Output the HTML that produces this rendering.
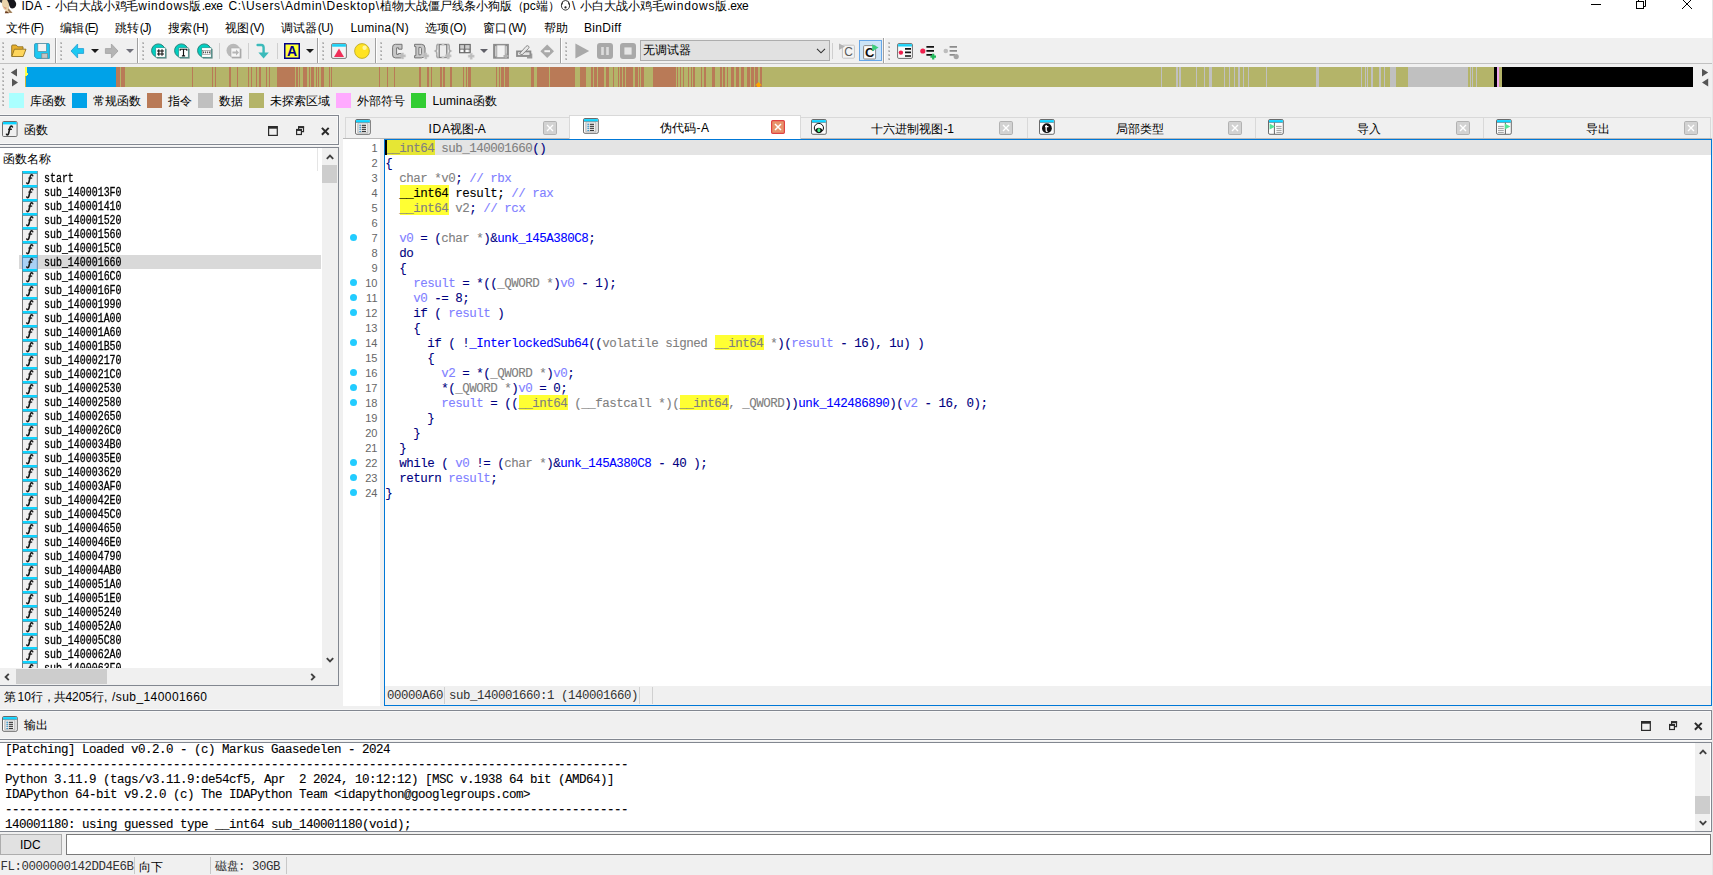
<!DOCTYPE html><html><head><meta charset="utf-8"><title>IDA</title><style>
html,body{margin:0;padding:0}
body{width:1713px;height:875px;overflow:hidden;background:#f0f0f0;position:relative;font-family:"Liberation Sans",sans-serif;font-size:12px;color:#000}
div{position:absolute;box-sizing:border-box;white-space:pre}
svg{position:absolute;overflow:visible}
.t{font-family:"Liberation Sans",sans-serif;font-size:12px;line-height:14px;color:#000}
.m{font-family:"Liberation Mono",monospace;font-size:12.5px;letter-spacing:-0.5px;line-height:15px;color:#000;-webkit-text-stroke:0.1px}
.fn{font-family:"Liberation Mono",monospace;font-size:12px;line-height:14px;color:#000;transform:scaleX(0.828);transform-origin:0 0;-webkit-text-stroke:0.3px #000}
.ln{font-family:"Liberation Sans",sans-serif;font-size:11px;line-height:15px;color:#666;text-align:right;width:36px}
.k{color:#808080}.n{color:#000080}.v{color:#8080ff}.b{color:#0000ff}.c{color:#8080ff}.d{color:#000}
.y{}
.st{font-family:"Liberation Mono",monospace;font-size:12.4px;letter-spacing:-0.44px;line-height:14px;color:#333}
</style></head><body>
<div style="left:0px;top:0px;width:1712px;height:38px;background:#fff"></div>
<svg style="left:0;top:0" width="17" height="14" viewBox="0 0 17 14"><defs><filter id="bl" x="-10%" y="-10%" width="120%" height="120%"><feGaussianBlur stdDeviation="0.45"/></filter></defs><g filter="url(#bl)">
<path d="M2 -1 H9 L9 9 L12.6 13 H5 L5.6 10.4 Q3 9 2.2 6 Q1.5 3 2 -1Z" fill="#ead3ab"/>
<path d="M2.8 5.6 Q4.4 8 6.6 7.4 L6 9.2 Q3.8 8.8 2.8 5.6Z" fill="#d9977c"/>
<path d="M6.6 -1 H13 Q17 2 16 5.6 Q15 8.6 12 8.6 Q10 8.4 9.4 6 Q9 3 6.6 -1Z" fill="#15151a"/>
<path d="M-1 -1 H2.6 L1.8 3 Q0.4 2.6 -1 1Z" fill="#3a3a3a"/>
<path d="M8.6 8.4 L12.4 12.8 L9.6 13 L8 10Z" fill="#9a7a58"/>
<path d="M4.8 13.2 L5.6 11 L8.2 12 L9 13.2Z" fill="#6b3d22"/>
</g></svg>
<div class="t" style="left:21.5px;top:-1px;letter-spacing:0.248px;">IDA</div>
<div class="t" style="left:46.6px;top:-1px;letter-spacing:0.000px;">-</div>
<div class="t" style="left:54.7px;top:-1px;letter-spacing:-0.033px;">小白大战小鸡毛</div>
<div class="t" style="left:138.3px;top:-1px;letter-spacing:0.747px;">windows</div>
<div class="t" style="left:189px;top:-1px;letter-spacing:0.000px;">版</div>
<div class="t" style="left:201.7px;top:-1px;letter-spacing:-0.461px;">.exe</div>
<div class="t" style="left:228.4px;top:-1px;letter-spacing:0.722px;">C:\Users\Admin\Desktop\</div>
<div class="t" style="left:379.5px;top:-1px;letter-spacing:0.000px;">植物大战僵尸线条小狗版</div>
<div class="t" style="left:511.5px;top:-1px;letter-spacing:0.000px;">（</div>
<div class="t" style="left:523px;top:-1px;letter-spacing:0.126px;">pc</div>
<div class="t" style="left:536px;top:-1px;letter-spacing:0.000px;">端</div>
<div class="t" style="left:548px;top:-1px;letter-spacing:0.000px;">）</div>
<div class="t" style="left:572px;top:-1px;letter-spacing:0.000px;">\</div>
<div class="t" style="left:580.3px;top:-1px;letter-spacing:-0.033px;">小白大战小鸡毛</div>
<div class="t" style="left:663.9px;top:-1px;letter-spacing:0.747px;">windows</div>
<div class="t" style="left:714.6px;top:-1px;letter-spacing:0.000px;">版</div>
<div class="t" style="left:727.3px;top:-1px;letter-spacing:-0.461px;">.exe</div>
<svg style="left:560px;top:0" width="11" height="12" viewBox="0 0 12 12"><path d="M3 1 Q6 -1 9 1 L10.5 5 Q10.5 10 6 10.5 Q1.5 10 1.5 5Z" fill="#fff" stroke="#222" stroke-width="1"/><path d="M2.5 1 L1 5 L3 4Z M9.5 1 L11 5 L9 4Z" fill="#222"/><circle cx="6" cy="7.5" r="1.2" fill="#222"/></svg>
<svg style="left:1585px;top:0" width="120" height="12" viewBox="0 0 120 12" fill="none" stroke="#000" stroke-width="1">
<path d="M6 4.5 H16"/><rect x="51.5" y="1.5" width="7" height="7"/><path d="M53.5 1.5 V-1 M60.5 -1 V6.5 H58.5"/><path d="M97 -1 L107 9 M107 -1 L97 9"/></svg>
<div class="t" style="left:5.7px;top:21px;letter-spacing:0.000px;">文件</div>
<div class="t" style="left:30.8px;top:21px;letter-spacing:-1.061px;">(F)</div>
<div class="t" style="left:59.7px;top:21px;letter-spacing:0.000px;">编辑</div>
<div class="t" style="left:84.8px;top:21px;letter-spacing:-1.148px;">(E)</div>
<div class="t" style="left:114.7px;top:21px;letter-spacing:-0.000px;">跳转</div>
<div class="t" style="left:139.8px;top:21px;letter-spacing:-1.146px;">(J)</div>
<div class="t" style="left:167.7px;top:21px;letter-spacing:0.000px;">搜索</div>
<div class="t" style="left:192.8px;top:21px;letter-spacing:-0.479px;">(H)</div>
<div class="t" style="left:224.7px;top:21px;letter-spacing:0.000px;">视图</div>
<div class="t" style="left:249.8px;top:21px;letter-spacing:-0.648px;">(V)</div>
<div class="t" style="left:280.7px;top:21px;letter-spacing:0.000px;">调试器</div>
<div class="t" style="left:317.8px;top:21px;letter-spacing:-0.479px;">(U)</div>
<div class="t" style="left:350.4px;top:21px;letter-spacing:0.286px;">Lumina(N)</div>
<div class="t" style="left:424.7px;top:21px;letter-spacing:0.000px;">选项</div>
<div class="t" style="left:449.8px;top:21px;letter-spacing:-0.363px;">(O)</div>
<div class="t" style="left:483.09999999999997px;top:21px;letter-spacing:0.000px;">窗口</div>
<div class="t" style="left:508.2px;top:21px;letter-spacing:-0.459px;">(W)</div>
<div class="t" style="left:543.5px;top:21px;letter-spacing:0.000px;">帮助</div>
<div class="t" style="left:583.9px;top:21px;letter-spacing:0.329px;">BinDiff</div>
<div style="left:0px;top:39px;width:1712px;height:25px;background:#f0f0f0;border-bottom:1px solid #c0c0c0"></div>
<div style="left:2px;top:42px;width:2px;height:2px;background:#c6c6c6"></div>
<div style="left:3px;top:43px;width:1px;height:1px;background:#a6a6a6"></div>
<div style="left:2px;top:46px;width:2px;height:2px;background:#c6c6c6"></div>
<div style="left:3px;top:47px;width:1px;height:1px;background:#a6a6a6"></div>
<div style="left:2px;top:50px;width:2px;height:2px;background:#c6c6c6"></div>
<div style="left:3px;top:51px;width:1px;height:1px;background:#a6a6a6"></div>
<div style="left:2px;top:54px;width:2px;height:2px;background:#c6c6c6"></div>
<div style="left:3px;top:55px;width:1px;height:1px;background:#a6a6a6"></div>
<div style="left:2px;top:58px;width:2px;height:2px;background:#c6c6c6"></div>
<div style="left:3px;top:59px;width:1px;height:1px;background:#a6a6a6"></div>
<div style="left:60px;top:42px;width:2px;height:2px;background:#c6c6c6"></div>
<div style="left:61px;top:43px;width:1px;height:1px;background:#a6a6a6"></div>
<div style="left:60px;top:46px;width:2px;height:2px;background:#c6c6c6"></div>
<div style="left:61px;top:47px;width:1px;height:1px;background:#a6a6a6"></div>
<div style="left:60px;top:50px;width:2px;height:2px;background:#c6c6c6"></div>
<div style="left:61px;top:51px;width:1px;height:1px;background:#a6a6a6"></div>
<div style="left:60px;top:54px;width:2px;height:2px;background:#c6c6c6"></div>
<div style="left:61px;top:55px;width:1px;height:1px;background:#a6a6a6"></div>
<div style="left:60px;top:58px;width:2px;height:2px;background:#c6c6c6"></div>
<div style="left:61px;top:59px;width:1px;height:1px;background:#a6a6a6"></div>
<div style="left:142px;top:42px;width:2px;height:2px;background:#c6c6c6"></div>
<div style="left:143px;top:43px;width:1px;height:1px;background:#a6a6a6"></div>
<div style="left:142px;top:46px;width:2px;height:2px;background:#c6c6c6"></div>
<div style="left:143px;top:47px;width:1px;height:1px;background:#a6a6a6"></div>
<div style="left:142px;top:50px;width:2px;height:2px;background:#c6c6c6"></div>
<div style="left:143px;top:51px;width:1px;height:1px;background:#a6a6a6"></div>
<div style="left:142px;top:54px;width:2px;height:2px;background:#c6c6c6"></div>
<div style="left:143px;top:55px;width:1px;height:1px;background:#a6a6a6"></div>
<div style="left:142px;top:58px;width:2px;height:2px;background:#c6c6c6"></div>
<div style="left:143px;top:59px;width:1px;height:1px;background:#a6a6a6"></div>
<div style="left:322px;top:42px;width:2px;height:2px;background:#c6c6c6"></div>
<div style="left:323px;top:43px;width:1px;height:1px;background:#a6a6a6"></div>
<div style="left:322px;top:46px;width:2px;height:2px;background:#c6c6c6"></div>
<div style="left:323px;top:47px;width:1px;height:1px;background:#a6a6a6"></div>
<div style="left:322px;top:50px;width:2px;height:2px;background:#c6c6c6"></div>
<div style="left:323px;top:51px;width:1px;height:1px;background:#a6a6a6"></div>
<div style="left:322px;top:54px;width:2px;height:2px;background:#c6c6c6"></div>
<div style="left:323px;top:55px;width:1px;height:1px;background:#a6a6a6"></div>
<div style="left:322px;top:58px;width:2px;height:2px;background:#c6c6c6"></div>
<div style="left:323px;top:59px;width:1px;height:1px;background:#a6a6a6"></div>
<div style="left:380px;top:42px;width:2px;height:2px;background:#c6c6c6"></div>
<div style="left:381px;top:43px;width:1px;height:1px;background:#a6a6a6"></div>
<div style="left:380px;top:46px;width:2px;height:2px;background:#c6c6c6"></div>
<div style="left:381px;top:47px;width:1px;height:1px;background:#a6a6a6"></div>
<div style="left:380px;top:50px;width:2px;height:2px;background:#c6c6c6"></div>
<div style="left:381px;top:51px;width:1px;height:1px;background:#a6a6a6"></div>
<div style="left:380px;top:54px;width:2px;height:2px;background:#c6c6c6"></div>
<div style="left:381px;top:55px;width:1px;height:1px;background:#a6a6a6"></div>
<div style="left:380px;top:58px;width:2px;height:2px;background:#c6c6c6"></div>
<div style="left:381px;top:59px;width:1px;height:1px;background:#a6a6a6"></div>
<div style="left:565px;top:42px;width:2px;height:2px;background:#c6c6c6"></div>
<div style="left:566px;top:43px;width:1px;height:1px;background:#a6a6a6"></div>
<div style="left:565px;top:46px;width:2px;height:2px;background:#c6c6c6"></div>
<div style="left:566px;top:47px;width:1px;height:1px;background:#a6a6a6"></div>
<div style="left:565px;top:50px;width:2px;height:2px;background:#c6c6c6"></div>
<div style="left:566px;top:51px;width:1px;height:1px;background:#a6a6a6"></div>
<div style="left:565px;top:54px;width:2px;height:2px;background:#c6c6c6"></div>
<div style="left:566px;top:55px;width:1px;height:1px;background:#a6a6a6"></div>
<div style="left:565px;top:58px;width:2px;height:2px;background:#c6c6c6"></div>
<div style="left:566px;top:59px;width:1px;height:1px;background:#a6a6a6"></div>
<div style="left:888px;top:42px;width:2px;height:2px;background:#c6c6c6"></div>
<div style="left:889px;top:43px;width:1px;height:1px;background:#a6a6a6"></div>
<div style="left:888px;top:46px;width:2px;height:2px;background:#c6c6c6"></div>
<div style="left:889px;top:47px;width:1px;height:1px;background:#a6a6a6"></div>
<div style="left:888px;top:50px;width:2px;height:2px;background:#c6c6c6"></div>
<div style="left:889px;top:51px;width:1px;height:1px;background:#a6a6a6"></div>
<div style="left:888px;top:54px;width:2px;height:2px;background:#c6c6c6"></div>
<div style="left:889px;top:55px;width:1px;height:1px;background:#a6a6a6"></div>
<div style="left:888px;top:58px;width:2px;height:2px;background:#c6c6c6"></div>
<div style="left:889px;top:59px;width:1px;height:1px;background:#a6a6a6"></div>
<div style="left:55px;top:38px;width:1px;height:25px;background:#a0a0a0"></div>
<div style="left:56px;top:38px;width:1px;height:25px;background:#fff"></div>
<div style="left:137px;top:38px;width:1px;height:25px;background:#a0a0a0"></div>
<div style="left:138px;top:38px;width:1px;height:25px;background:#fff"></div>
<div style="left:317px;top:38px;width:1px;height:25px;background:#a0a0a0"></div>
<div style="left:318px;top:38px;width:1px;height:25px;background:#fff"></div>
<div style="left:375px;top:38px;width:1px;height:25px;background:#a0a0a0"></div>
<div style="left:376px;top:38px;width:1px;height:25px;background:#fff"></div>
<div style="left:560px;top:38px;width:1px;height:25px;background:#a0a0a0"></div>
<div style="left:561px;top:38px;width:1px;height:25px;background:#fff"></div>
<div style="left:883px;top:38px;width:1px;height:25px;background:#a0a0a0"></div>
<div style="left:884px;top:38px;width:1px;height:25px;background:#fff"></div>
<div style="left:219px;top:43px;width:1px;height:16px;background:#cfcfcf"></div>
<div style="left:248px;top:43px;width:1px;height:16px;background:#cfcfcf"></div>
<div style="left:277px;top:43px;width:1px;height:16px;background:#cfcfcf"></div>
<div style="left:832px;top:43px;width:1px;height:16px;background:#cfcfcf"></div>
<svg style="left:90.5px;top:49px" width="8" height="4" viewBox="0 0 8 4"><path d="M0 0H8L4 4Z" fill="#1a1a1a"/></svg>
<svg style="left:125.5px;top:49px" width="8" height="4" viewBox="0 0 8 4"><path d="M0 0H8L4 4Z" fill="#70707a"/></svg>
<svg style="left:305.5px;top:49px" width="8" height="4" viewBox="0 0 8 4"><path d="M0 0H8L4 4Z" fill="#1a1a1a"/></svg>
<svg style="left:480px;top:49px" width="8" height="4" viewBox="0 0 8 4"><path d="M0 0H8L4 4Z" fill="#606068"/></svg>
<svg style="left:11px;top:44px" width="16" height="14" viewBox="0 0 16 14"><path d="M0.7 12.3 V2 Q0.7 1 1.7 1 H5.2 L6.8 2.8 H12 V5" fill="#e8b02c" stroke="#8f7120" stroke-width="0.9"/><path d="M0.8 12.5 L3.4 5.2 H15 L12.2 12.5Z" fill="#ffd65c" stroke="#8f7120" stroke-width="0.9"/></svg>
<svg style="left:34px;top:43px" width="16" height="16" viewBox="0 0 16 16"><path d="M0.6 1.6 Q0.6 0.6 1.6 0.6 H14.4 Q15.4 0.6 15.4 1.6 V15.4 H2.6 L0.6 13.4Z" fill="#1cc9f2" stroke="#2a93b8" stroke-width="0.9"/><rect x="3.8" y="0.6" width="8.6" height="7.8" fill="#f4f4f4" stroke="#5c8ea0" stroke-width="0.7"/><rect x="7.8" y="10.6" width="5.6" height="4.6" fill="#c4c4c4" stroke="#8a8a8a" stroke-width="0.7"/></svg>
<svg style="left:70px;top:43px" width="15" height="16" viewBox="0 0 15 16"><path d="M1 8 L7.6 1 V5.6 H13.6 V10.4 H7.6 V15Z" fill="#1cc9f2" stroke="#2aa3d6" stroke-width="0.9" stroke-linejoin="round"/></svg>
<svg style="left:104px;top:43px" width="15" height="16" viewBox="0 0 15 16"><path d="M14 8 L7.4 1 V5.6 H1.4 V10.4 H7.4 V15Z" fill="#b4b4b4" stroke="#a6a6a6" stroke-width="0.9" stroke-linejoin="round"/></svg>
<svg style="left:151px;top:43px" width="17" height="16" viewBox="0 0 17 16"><circle cx="7.3" cy="7.6" r="6.7" fill="#00cfc1" stroke="#2b827b" stroke-width="1"/><rect x="5.8" y="5.8" width="9.8" height="9.8" fill="#3f6f6a" opacity=".8"/><rect x="4.8" y="4.8" width="9.4" height="9.4" fill="#fff" stroke="#2b827b" stroke-width="0.5"/><path d="M7.8 6.2V12.8M11 6.2V12.8M6 8H13M6 11H13" stroke="#111" stroke-width="1.1" fill="none"/></svg>
<svg style="left:174px;top:43px" width="17" height="16" viewBox="0 0 17 16"><circle cx="7.3" cy="7.6" r="6.7" fill="#00cfc1" stroke="#2b827b" stroke-width="1"/><rect x="5.8" y="5.8" width="9.8" height="9.8" fill="#3f6f6a" opacity=".8"/><rect x="4.8" y="4.8" width="9.4" height="9.4" fill="#fff" stroke="#2b827b" stroke-width="0.5"/><path d="M6.2 7.8V6.2H12.8V7.8M9.5 6.2V12.9M7.9 12.9H11.1" stroke="#111" stroke-width="1.15" fill="none"/></svg>
<svg style="left:197px;top:43px" width="17" height="16" viewBox="0 0 17 16"><circle cx="7.3" cy="7.6" r="6.7" fill="#00cfc1" stroke="#2b827b" stroke-width="1"/><rect x="5.8" y="5.8" width="9.8" height="9.8" fill="#3f6f6a" opacity=".8"/><rect x="4.8" y="4.8" width="9.4" height="9.4" fill="#fff" stroke="#2b827b" stroke-width="0.5"/><rect x="5.4" y="7.4" width="8" height="4" fill="#fff" stroke="#666" stroke-width=".5"/><path d="M6 9.4H13" stroke="#555" stroke-width="1.8" stroke-dasharray="1.2 0.8"/></svg>
<svg style="left:226px;top:43px" width="17" height="16" viewBox="0 0 17 16"><circle cx="7.3" cy="7.5" r="6.8" fill="#b9b9b9"/><rect x="5.8" y="5.8" width="9.6" height="9.6" fill="#a9a9a9"/><rect x="5" y="5" width="9" height="9" fill="#f6f6f6" stroke="#aaa" stroke-width=".6"/><path d="M6.4 8.4H10V6.6L13 9.5L10 12.4V10.6H6.4Z" fill="#b5b5b5"/></svg>
<svg style="left:256px;top:43px" width="14" height="16" viewBox="0 0 14 16"><path d="M1.6 2 H5.2 Q7.6 2 7.6 4.6 V10" fill="none" stroke="#3bbaba" stroke-width="2.4" stroke-linecap="round"/><path d="M2.4 9.6 H12.8 L7.6 15.4Z" fill="#3bbaba"/></svg>
<svg style="left:284px;top:43px" width="16" height="16" viewBox="0 0 16 16"><rect x="0.75" y="0.75" width="14.5" height="14.5" fill="#ffff36" stroke="#00008a" stroke-width="1.5"/><text x="8" y="13.2" text-anchor="middle" font-family="Liberation Sans" font-weight="bold" font-size="14" fill="#00008a">A</text></svg>
<svg style="left:331px;top:43px" width="16" height="16" viewBox="0 0 16 16"><rect x="0.6" y="0.6" width="14.8" height="14.8" rx="1.4" fill="#f4f4f4" stroke="#7c7c7c" stroke-width="1"/><rect x="1.1" y="1.1" width="13.8" height="2.6" fill="#1bd1f6"/><path d="M8 5.4 L13 14 H3Z" fill="#f0305a"/></svg>
<svg style="left:354px;top:43px" width="16" height="16" viewBox="0 0 16 16"><circle cx="8" cy="8" r="7.4" fill="#ffe322" stroke="#b9a51e" stroke-width=".8"/><circle cx="10.6" cy="4.8" r="2.2" fill="#fff8b0" opacity=".9"/></svg>
<svg style="left:392px;top:43px" width="14" height="17" viewBox="0 0 14 17"><path d="M10 1.3 H3.4 Q0.6 1.3 0.6 4.2 V12 Q0.6 14.9 3.4 14.9 H9.4 V10.6 H6.4 V11.4 H4.6 V4.8 H6.6 V6.2 H10Z" fill="#c8c8c8" stroke="#747474" stroke-width="1"/><path transform="translate(7.6,9.9)" d="M1.9 0H4.1V1.9H6V4.1H4.1V6H1.9V4.1H0V1.9H1.9Z" fill="#bcbcbc" stroke="#cfcfcf" stroke-width=".5"/></svg>
<svg style="left:414px;top:43px" width="15" height="17" viewBox="0 0 15 17"><path fill-rule="evenodd" d="M0.6 1.3 H7.4 Q11 1.3 11 5 V11.2 Q11 14.9 7.4 14.9 H0.6 V12.6 H1.9 V3.6 H0.6Z M4.9 4.4 V11.8 H6.3 Q7.4 11.8 7.4 10.6 V5.6 Q7.4 4.4 6.3 4.4Z" fill="#c8c8c8" stroke="#747474" stroke-width="1"/><path transform="translate(8.8,9.9)" d="M1.9 0H4.1V1.9H6V4.1H4.1V6H1.9V4.1H0V1.9H1.9Z" fill="#bcbcbc" stroke="#cfcfcf" stroke-width=".5"/></svg>
<svg style="left:435px;top:43px" width="17" height="17" viewBox="0 0 17 17"><path d="M3.4 1.4 Q1.4 1.4 1.8 4.4 Q2 7.4 0.6 8 Q2 8.6 1.8 11.4 Q1.4 14.6 3.4 14.6M12.6 1.4 Q14.6 1.4 14.2 4.4 Q14 7.4 15.4 8 Q14 8.6 14.2 11.4 Q14.6 14.6 12.6 14.6" fill="none" stroke="#a8a8a8" stroke-width="1.6"/><rect x="4.2" y="1.5" width="7.6" height="13" fill="#ececec" stroke="#7e7e7e" stroke-width="1.3"/><rect x="6.6" y="0.8" width="2.8" height="1.6" fill="#c4c4c4"/><rect x="6.6" y="13.6" width="2.8" height="1.6" fill="#c4c4c4"/><path transform="translate(10.2,9.9)" d="M1.9 0H4.1V1.9H6V4.1H4.1V6H1.9V4.1H0V1.9H1.9Z" fill="#bcbcbc" stroke="#cfcfcf" stroke-width=".5"/></svg>
<svg style="left:459px;top:43px" width="17" height="17" viewBox="0 0 17 17"><rect x="0.6" y="1.5" width="10.6" height="8.2" fill="#cdcdcd" stroke="#6c6c6c" stroke-width="1.2"/><path d="M5.6 1.5V9.7" stroke="#6c6c6c" stroke-width="1.3"/><path d="M0.6 6.2H11.2" stroke="#6c6c6c" stroke-width="1"/><rect x="1.6" y="6.8" width="2.4" height="2.2" fill="#fafafa"/><rect x="6.8" y="6.8" width="2.6" height="2.2" fill="#fafafa"/><path transform="translate(9.2,10.2)" d="M1.9 0H4.1V1.9H6V4.1H4.1V6H1.9V4.1H0V1.9H1.9Z" fill="#bcbcbc" stroke="#cfcfcf" stroke-width=".5"/></svg>
<svg style="left:493px;top:44px" width="17" height="15" viewBox="0 0 17 15"><rect x="1.2" y="1" width="13.6" height="12.6" fill="#e6e6e6" stroke="#8a8a8a" stroke-width="2.2"/><rect x="3.8" y="1" width="8.4" height="12.6" fill="#f2f2f2" stroke="#9a9a9a" stroke-width=".8"/><path d="M10.5 12H15.5M13 9.5V14.5" stroke="#b0b0b0" stroke-width="2"/></svg>
<svg style="left:516px;top:44px" width="17" height="15" viewBox="0 0 17 15"><rect x="1" y="7.4" width="13.4" height="4.6" fill="#e2e2e2" stroke="#8a8a8a" stroke-width="1.8"/><path d="M3.6 9.6 L10 2.4 Q11.4 1 12.6 2.2 Q13.6 3.4 12.4 4.6 L6 10.8Z" fill="#e8e8e8" stroke="#8a8a8a" stroke-width="1"/><path d="M11 13.6H15.5V9.5" fill="none" stroke="#9a9a9a" stroke-width="1.6"/></svg>
<svg style="left:540px;top:44px" width="15" height="15" viewBox="0 0 15 15"><path d="M7.2 0.4 L14 7.2 L7.2 14 L0.4 7.2Z" fill="#a9a9a9"/><rect x="4.4" y="6.2" width="5.6" height="2" fill="#f2f2f2"/></svg>
<svg style="left:575px;top:43px" width="15" height="16" viewBox="0 0 15 16"><path d="M0.4 0.6 L14.2 8 L0.4 15.4Z" fill="#a9a9a9"/></svg>
<svg style="left:597px;top:43px" width="16" height="16" viewBox="0 0 16 16"><rect x="0" y="0" width="16" height="16" rx="3" fill="#a9a9a9"/><rect x="4.2" y="4" width="2.6" height="8" fill="#dcdcdc"/><rect x="9.2" y="4" width="2.6" height="8" fill="#dcdcdc"/></svg>
<svg style="left:620px;top:43px" width="16" height="16" viewBox="0 0 16 16"><rect x="0" y="0" width="16" height="16" rx="3" fill="#a9a9a9"/><rect x="4.4" y="4.4" width="7.2" height="7.2" fill="#e6e6e6"/></svg>
<div style="left:640px;top:40px;width:190px;height:21px;background:#e1e1e1;border:1px solid #adadad"></div>
<div class="t" style="left:643px;top:43px;">无调试器</div>
<svg style="left:816px;top:48px" width="10" height="6" viewBox="0 0 10 6"><path d="M1 0.8 L5 4.8 L9 0.8" fill="none" stroke="#333" stroke-width="1.1"/></svg>
<svg style="left:838px;top:43px" width="17" height="16" viewBox="0 0 17 16"><rect x="4.4" y="2.2" width="12" height="13" rx="1" fill="#f4f4f4" stroke="#c4c4c4" stroke-width="1"/><path d="M1 0.5 L7 3.6 L1 7Z" fill="#b4b4b4"/><text x="10.6" y="13" text-anchor="middle" font-family="Liberation Sans" font-size="12" fill="#5a5a5a">C</text></svg>
<div style="left:859px;top:40px;width:23px;height:21px;background:#cce4f7;border:1px solid #66a7e8"></div>
<svg style="left:862px;top:43px" width="18" height="17" viewBox="0 0 18 17"><rect x="1.6" y="2.6" width="12" height="13.4" rx="1" fill="#fafafa" stroke="#8a8a8a" stroke-width="1"/><text x="7.8" y="13.8" text-anchor="middle" font-family="Liberation Sans" font-weight="bold" font-size="13" fill="#111">C</text><path d="M10.2 1.2 L16.6 4.6 L10.2 8.2Z" fill="#3ccf7c"/></svg>
<svg style="left:897px;top:43px" width="16" height="16" viewBox="0 0 16 16"><rect x="0.6" y="0.6" width="14.8" height="14.8" rx="1.2" fill="#fafafa" stroke="#6e6e6e" stroke-width="1"/><rect x="1.1" y="1.1" width="13.8" height="2.4" fill="#1bd1f6"/><circle cx="3.9" cy="9.6" r="2.2" fill="#f0204e"/><path d="M8 5.8H14M8 9.4H14M8 13H14" stroke="#111" stroke-width="1.7"/></svg>
<svg style="left:919px;top:43px" width="18" height="17" viewBox="0 0 18 17"><circle cx="3.8" cy="8" r="2.6" fill="#f0204e"/><path d="M7.4 3.8H15M7.4 7.8H15M7.4 11.8H13" stroke="#111" stroke-width="1.7"/><path d="M11.4 13.6H17M14.2 10.8V16.4" stroke="#1fb85a" stroke-width="2.2"/></svg>
<svg style="left:942px;top:43px" width="18" height="17" viewBox="0 0 18 17"><circle cx="3.8" cy="8" r="2.3" fill="#bdbdbd"/><path d="M7.6 3.8H15M7.6 7.8H15M7.6 11.8H13" stroke="#8c8c8c" stroke-width="1.7"/><circle cx="14.2" cy="13.6" r="2.6" fill="#a4a4a4"/></svg>
<div style="left:2px;top:68px;width:2px;height:2px;background:#c6c6c6"></div>
<div style="left:3px;top:69px;width:1px;height:1px;background:#a6a6a6"></div>
<div style="left:2px;top:72px;width:2px;height:2px;background:#c6c6c6"></div>
<div style="left:3px;top:73px;width:1px;height:1px;background:#a6a6a6"></div>
<div style="left:2px;top:76px;width:2px;height:2px;background:#c6c6c6"></div>
<div style="left:3px;top:77px;width:1px;height:1px;background:#a6a6a6"></div>
<div style="left:2px;top:80px;width:2px;height:2px;background:#c6c6c6"></div>
<div style="left:3px;top:81px;width:1px;height:1px;background:#a6a6a6"></div>
<div style="left:2px;top:84px;width:2px;height:2px;background:#c6c6c6"></div>
<div style="left:3px;top:85px;width:1px;height:1px;background:#a6a6a6"></div>
<div style="left:2px;top:88px;width:2px;height:2px;background:#c6c6c6"></div>
<div style="left:3px;top:89px;width:1px;height:1px;background:#a6a6a6"></div>
<div style="left:2px;top:92px;width:2px;height:2px;background:#c6c6c6"></div>
<div style="left:3px;top:93px;width:1px;height:1px;background:#a6a6a6"></div>
<div style="left:2px;top:96px;width:2px;height:2px;background:#c6c6c6"></div>
<div style="left:3px;top:97px;width:1px;height:1px;background:#a6a6a6"></div>
<div style="left:2px;top:100px;width:2px;height:2px;background:#c6c6c6"></div>
<div style="left:3px;top:101px;width:1px;height:1px;background:#a6a6a6"></div>
<div style="left:2px;top:104px;width:2px;height:2px;background:#c6c6c6"></div>
<div style="left:3px;top:105px;width:1px;height:1px;background:#a6a6a6"></div>
<svg style="left:10px;top:68px" width="8" height="19" viewBox="0 0 8 19"><path d="M7 0.4 L0.8 4.4 L7 8.6Z M2 10.4 L8 14.5 L2 18.6Z" fill="#555"/></svg>
<svg style="left:1701px;top:68px" width="8" height="19" viewBox="0 0 8 19"><path d="M1 0.8 L7.2 4.6 L1 8.6Z M7.2 10.4 L1 14.4 L7.2 18.4Z" fill="#555"/></svg>
<div style="left:25px;top:67px;width:1668px;height:20px;background:#b4b469"></div>
<div style="left:25px;top:67px;width:91px;height:20px;background:#00a2e8"></div>
<div style="left:25px;top:67px;width:1px;height:20px;background:#c8b840"></div>
<div style="left:25px;top:67px;width:1.8px;height:9px;background:#ffff45"></div>
<div style="left:26.5px;top:72.5px;width:1.3px;height:2px;background:#ffff45"></div>
<div style="left:116px;top:67px;width:4px;height:20px;background:#b97a57"></div>
<div style="left:121px;top:67px;width:3.7px;height:20px;background:#b97a57"></div>
<div style="left:192px;top:67px;width:1px;height:20px;background:#b97a57"></div>
<div style="left:211.6px;top:67px;width:1.0px;height:20px;background:#b97a57"></div>
<div style="left:214.6px;top:67px;width:1.0px;height:20px;background:#b97a57"></div>
<div style="left:229px;top:67px;width:2px;height:20px;background:#b97a57"></div>
<div style="left:236.7px;top:67px;width:1.3px;height:20px;background:#b97a57"></div>
<div style="left:248px;top:67px;width:1.2px;height:20px;background:#b97a57"></div>
<div style="left:250.5px;top:67px;width:1.2px;height:20px;background:#b97a57"></div>
<div style="left:256px;top:67px;width:1.2px;height:20px;background:#b97a57"></div>
<div style="left:258.5px;top:67px;width:1.0px;height:20px;background:#b97a57"></div>
<div style="left:260px;top:67px;width:1px;height:20px;background:#b97a57"></div>
<div style="left:266px;top:67px;width:1.3px;height:20px;background:#b97a57"></div>
<div style="left:268.6px;top:67px;width:1.4px;height:20px;background:#b97a57"></div>
<div style="left:276.9px;top:67px;width:18.1px;height:20px;background:#b97a57"></div>
<div style="left:296px;top:67px;width:1.5px;height:20px;background:#b97a57"></div>
<div style="left:298.7px;top:67px;width:1.8px;height:20px;background:#b97a57"></div>
<div style="left:303px;top:67px;width:3.7px;height:20px;background:#b97a57"></div>
<div style="left:308.7px;top:67px;width:1.3px;height:20px;background:#b97a57"></div>
<div style="left:311px;top:67px;width:2.8px;height:20px;background:#b97a57"></div>
<div style="left:315.5px;top:67px;width:1.3px;height:20px;background:#b97a57"></div>
<div style="left:318px;top:67px;width:1.3px;height:20px;background:#b97a57"></div>
<div style="left:320.5px;top:67px;width:3.3px;height:20px;background:#b97a57"></div>
<div style="left:328.8px;top:67px;width:1.0px;height:20px;background:#b97a57"></div>
<div style="left:330.8px;top:67px;width:1.2px;height:20px;background:#b97a57"></div>
<div style="left:379px;top:67px;width:1px;height:20px;background:#b97a57"></div>
<div style="left:386.5px;top:67px;width:1.0px;height:20px;background:#b97a57"></div>
<div style="left:394px;top:67px;width:1px;height:20px;background:#b97a57"></div>
<div style="left:419px;top:67px;width:2px;height:20px;background:#b97a57"></div>
<div style="left:427px;top:67px;width:2px;height:20px;background:#b97a57"></div>
<div style="left:430.5px;top:67px;width:1.3px;height:20px;background:#b97a57"></div>
<div style="left:440px;top:67px;width:2px;height:20px;background:#b97a57"></div>
<div style="left:442.6px;top:67px;width:2.2px;height:20px;background:#b97a57"></div>
<div style="left:450px;top:67px;width:2px;height:20px;background:#b97a57"></div>
<div style="left:463px;top:67px;width:1.4px;height:20px;background:#b97a57"></div>
<div style="left:465.7px;top:67px;width:1.3px;height:20px;background:#b97a57"></div>
<div style="left:468px;top:67px;width:3px;height:20px;background:#b97a57"></div>
<div style="left:496px;top:67px;width:1.3px;height:20px;background:#b97a57"></div>
<div style="left:498.6px;top:67px;width:1.2px;height:20px;background:#b97a57"></div>
<div style="left:501px;top:67px;width:2.6px;height:20px;background:#b97a57"></div>
<div style="left:504.8px;top:67px;width:3.8px;height:20px;background:#b97a57"></div>
<div style="left:531px;top:67px;width:2.7px;height:20px;background:#b97a57"></div>
<div style="left:537px;top:67px;width:12.3px;height:20px;background:#b97a57"></div>
<div style="left:550px;top:67px;width:24.9px;height:20px;background:#b97a57"></div>
<div style="left:580px;top:67px;width:5.7px;height:20px;background:#b97a57"></div>
<div style="left:591.4px;top:67px;width:1.3px;height:20px;background:#b97a57"></div>
<div style="left:593.7px;top:67px;width:3.3px;height:20px;background:#b97a57"></div>
<div style="left:598.2px;top:67px;width:6.3px;height:20px;background:#b97a57"></div>
<div style="left:605.7px;top:67px;width:3.1px;height:20px;background:#b97a57"></div>
<div style="left:612.8px;top:67px;width:1.2px;height:20px;background:#b97a57"></div>
<div style="left:617.8px;top:67px;width:1.2px;height:20px;background:#b97a57"></div>
<div style="left:620.3px;top:67px;width:1.3px;height:20px;background:#b97a57"></div>
<div style="left:622.8px;top:67px;width:2.5px;height:20px;background:#b97a57"></div>
<div style="left:626.3px;top:67px;width:1.3px;height:20px;background:#b97a57"></div>
<div style="left:628.3px;top:67px;width:4.3px;height:20px;background:#b97a57"></div>
<div style="left:635.4px;top:67px;width:2.5px;height:20px;background:#b97a57"></div>
<div style="left:638.9px;top:67px;width:1.1px;height:20px;background:#b97a57"></div>
<div style="left:641.4px;top:67px;width:2.5px;height:20px;background:#b97a57"></div>
<div style="left:653px;top:67px;width:23px;height:20px;background:#b97a57"></div>
<div style="left:677.3px;top:67px;width:1.2px;height:20px;background:#b97a57"></div>
<div style="left:679.8px;top:67px;width:1.7px;height:20px;background:#b97a57"></div>
<div style="left:682.8px;top:67px;width:1.5px;height:20px;background:#b97a57"></div>
<div style="left:688px;top:67px;width:1.3px;height:20px;background:#b97a57"></div>
<div style="left:690.6px;top:67px;width:1.2px;height:20px;background:#b97a57"></div>
<div style="left:693px;top:67px;width:1.8px;height:20px;background:#b97a57"></div>
<div style="left:701px;top:67px;width:1.4px;height:20px;background:#b97a57"></div>
<div style="left:703.6px;top:67px;width:2.0px;height:20px;background:#b97a57"></div>
<div style="left:712px;top:67px;width:3px;height:20px;background:#b97a57"></div>
<div style="left:720.4px;top:67px;width:1.3px;height:20px;background:#b97a57"></div>
<div style="left:723px;top:67px;width:2px;height:20px;background:#b97a57"></div>
<div style="left:726.7px;top:67px;width:1.5px;height:20px;background:#b97a57"></div>
<div style="left:730.7px;top:67px;width:3.6px;height:20px;background:#b97a57"></div>
<div style="left:735.8px;top:67px;width:3.5px;height:20px;background:#b97a57"></div>
<div style="left:740.8px;top:67px;width:3.0px;height:20px;background:#b97a57"></div>
<div style="left:746.8px;top:67px;width:3.2px;height:20px;background:#b97a57"></div>
<div style="left:751.3px;top:67px;width:2.5px;height:20px;background:#b97a57"></div>
<div style="left:755px;top:67px;width:2.6px;height:20px;background:#b97a57"></div>
<div style="left:759.6px;top:67px;width:2.3px;height:20px;background:#b97a57"></div>
<div style="left:1161px;top:67px;width:1px;height:20px;background:#c0c0c0"></div>
<div style="left:1176.3px;top:67px;width:1.7px;height:20px;background:#c0c0c0"></div>
<div style="left:1179.4px;top:67px;width:1.2px;height:20px;background:#c0c0c0"></div>
<div style="left:1196px;top:67px;width:1px;height:20px;background:#c0c0c0"></div>
<div style="left:1204px;top:67px;width:1px;height:20px;background:#c0c0c0"></div>
<div style="left:1209px;top:67px;width:3px;height:20px;background:#c0c0c0"></div>
<div style="left:1224px;top:67px;width:1px;height:20px;background:#c0c0c0"></div>
<div style="left:1229px;top:67px;width:1px;height:20px;background:#c0c0c0"></div>
<div style="left:1234px;top:67px;width:1px;height:20px;background:#c0c0c0"></div>
<div style="left:1238.3px;top:67px;width:1.7px;height:20px;background:#c0c0c0"></div>
<div style="left:1243px;top:67px;width:1px;height:20px;background:#c0c0c0"></div>
<div style="left:1248px;top:67px;width:1px;height:20px;background:#c0c0c0"></div>
<div style="left:1265.8px;top:67px;width:1.4px;height:20px;background:#c0c0c0"></div>
<div style="left:1316px;top:67px;width:2.7px;height:20px;background:#c0c0c0"></div>
<div style="left:1360.5px;top:67px;width:1.0px;height:20px;background:#c0c0c0"></div>
<div style="left:1365px;top:67px;width:1.3px;height:20px;background:#c0c0c0"></div>
<div style="left:1367.2px;top:67px;width:1.2px;height:20px;background:#c0c0c0"></div>
<div style="left:1371px;top:67px;width:2px;height:20px;background:#c0c0c0"></div>
<div style="left:1379px;top:67px;width:2px;height:20px;background:#c0c0c0"></div>
<div style="left:1383.8px;top:67px;width:1.2px;height:20px;background:#c0c0c0"></div>
<div style="left:1390px;top:67px;width:6.2px;height:20px;background:#c0c0c0"></div>
<div style="left:1408px;top:67px;width:60px;height:20px;background:#c0c0c0"></div>
<div style="left:1469.7px;top:67px;width:1.1px;height:20px;background:#c0c0c0"></div>
<div style="left:1472.3px;top:67px;width:1.1px;height:20px;background:#c0c0c0"></div>
<div style="left:1476px;top:67px;width:1px;height:20px;background:#c0c0c0"></div>
<div style="left:1494px;top:67px;width:3.2px;height:20px;background:#000"></div>
<div style="left:1497.2px;top:67px;width:2.1px;height:20px;background:#f0a8f0"></div>
<div style="left:1502px;top:67px;width:191px;height:20px;background:#000"></div>
<svg style="left:755px;top:82px" width="7" height="5" viewBox="0 0 7 5"><path d="M3.5 0 L7 3.4 H5 V5 H2 V3.4 H0Z" fill="#ffa500"/></svg>
<div style="left:9px;top:93px;width:15px;height:15px;background:#aaffff"></div>
<div class="t" style="left:30px;top:94px;">库函数</div>
<div style="left:72px;top:93px;width:15px;height:15px;background:#00a2e8"></div>
<div class="t" style="left:93px;top:94px;">常规函数</div>
<div style="left:147px;top:93px;width:15px;height:15px;background:#b97a57"></div>
<div class="t" style="left:168px;top:94px;">指令</div>
<div style="left:198px;top:93px;width:15px;height:15px;background:#c0c0c0"></div>
<div class="t" style="left:219px;top:94px;">数据</div>
<div style="left:249px;top:93px;width:15px;height:15px;background:#b4b469"></div>
<div class="t" style="left:270px;top:94px;">未探索区域</div>
<div style="left:336px;top:93px;width:15px;height:15px;background:#ffaaff"></div>
<div class="t" style="left:357px;top:94px;">外部符号</div>
<div style="left:411px;top:93px;width:15px;height:15px;background:#32cd32"></div>
<div class="t" style="left:432.4px;top:94px;letter-spacing:0.129px;">Lumina</div>
<div class="t" style="left:472.6px;top:94px;">函数</div>
<div style="left:-3px;top:115px;width:342px;height:30px;border:1px solid #828790;background:#f0f0f0;box-shadow:0 0 0 1px #f8f8f8, inset 0 0 0 1px #f8f8f8"></div>
<svg style="left:2px;top:121px" width="16" height="16" viewBox="0 0 16 16"><rect x="0.5" y="0.5" width="14.6" height="15" rx="1.2" fill="#f0f0f0" stroke="#6e6e6e" stroke-width="1"/><rect x="1" y="1" width="13.6" height="2.4" fill="#0dd3ff"/><g transform="translate(-0.3,1)"><path d="M10.7 4.9 Q10.5 3.9 9.5 4 Q8.5 4.2 8.2 5.8 L6.9 11.5 Q6.6 12.9 5.6 12.9 Q4.9 12.9 4.8 12.2" fill="none" stroke="#1c1c1c" stroke-width="1.6" stroke-linecap="round"/><path d="M6.4 7.3H10.2" stroke="#1c1c1c" stroke-width="1.3"/></g></svg>
<div class="t" style="left:24px;top:123px;">函数</div>
<svg style="left:268px;top:126px" width="11" height="10" viewBox="0 0 11 10"><rect x="0.6" y="0.6" width="8.7" height="8.8" fill="none" stroke="#2b2b2b" stroke-width="1.2"/><rect x="0.6" y="0.6" width="8.7" height="2.1" fill="#2b2b2b"/></svg>
<svg style="left:296px;top:126px" width="9" height="10" viewBox="0 0 9 10"><path d="M2.6 3.2V0.8H7.5V5.7H5.8" fill="none" stroke="#2b2b2b" stroke-width="1.2"/><path d="M2 1.2H8.1" stroke="#2b2b2b" stroke-width="1.9"/><rect x="0.6" y="3.5" width="4.8" height="5" fill="none" stroke="#2b2b2b" stroke-width="1.2"/><path d="M0 4H6" stroke="#2b2b2b" stroke-width="1.9"/></svg>
<svg style="left:321px;top:127px" width="9" height="9" viewBox="0 0 9 9"><path d="M0.9 0.9L7.7 7.7M7.7 0.9L0.9 7.7" stroke="#2b2b2b" stroke-width="2"/></svg>
<div style="left:-1px;top:147px;width:340px;height:539px;border:1px solid #828790;background:#fff"></div>
<div class="t" style="left:3px;top:152px;">函数名称</div>
<div style="left:317px;top:148px;width:1px;height:23px;background:#e5e5e5"></div>
<div style="left:322px;top:148px;width:16px;height:520px;background:#f0f0f0"></div>
<div style="left:322px;top:165px;width:15px;height:18px;background:#cdcdcd"></div>
<svg style="left:325.5px;top:154px" width="8" height="6" viewBox="0 0 8 6"><path d="M0.8 4.8 L4 1.6 L7.2 4.8" fill="none" stroke="#404040" stroke-width="1.9"/></svg>
<svg style="left:325.5px;top:657px" width="8" height="6" viewBox="0 0 8 6"><path d="M0.8 1.2 L4 4.4 L7.2 1.2" fill="none" stroke="#404040" stroke-width="1.9"/></svg>
<div style="left:0px;top:668px;width:338px;height:17px;background:#f0f0f0"></div>
<div style="left:16px;top:669px;width:91px;height:15px;background:#cdcdcd"></div>
<svg style="left:4px;top:672.5px" width="6" height="8" viewBox="0 0 6 8"><path d="M4.8 0.8 L1.6 4 L4.8 7.2" fill="none" stroke="#404040" stroke-width="1.9"/></svg>
<svg style="left:310px;top:672.5px" width="6" height="8" viewBox="0 0 6 8"><path d="M1.2 0.8 L4.4 4 L1.2 7.2" fill="none" stroke="#404040" stroke-width="1.9"/></svg>
<div style="left:0;top:171px;width:322px;height:497px;overflow:hidden">
<svg style="left:22px;top:0px" width="16" height="14" viewBox="0 0 16 14"><rect x="0" y="0" width="15.8" height="14" fill="#7a7a7a"/><rect x="1" y="2.6" width="13.8" height="11.4" fill="#f0f0f0"/><rect x="0.6" y="0" width="14.6" height="2.1" fill="#0dd3ff"/><rect x="0.6" y="2.1" width="14.6" height="0.6" fill="#2a9fbf"/><g transform="translate(0,-0.2)"><path d="M10.7 4.9 Q10.5 3.9 9.5 4 Q8.5 4.2 8.2 5.8 L6.9 11.5 Q6.6 12.9 5.6 12.9 Q4.9 12.9 4.8 12.2" fill="none" stroke="#1c1c1c" stroke-width="1.6" stroke-linecap="round"/><path d="M6.4 7.3H10.2" stroke="#1c1c1c" stroke-width="1.3"/></g></svg>
<div class="fn" style="left:44px;top:1px;">start</div>
<svg style="left:22px;top:14px" width="16" height="14" viewBox="0 0 16 14"><rect x="0" y="0" width="15.8" height="14" fill="#7a7a7a"/><rect x="1" y="2.6" width="13.8" height="11.4" fill="#f0f0f0"/><rect x="0.6" y="0" width="14.6" height="2.1" fill="#0dd3ff"/><rect x="0.6" y="2.1" width="14.6" height="0.6" fill="#2a9fbf"/><g transform="translate(0,-0.2)"><path d="M10.7 4.9 Q10.5 3.9 9.5 4 Q8.5 4.2 8.2 5.8 L6.9 11.5 Q6.6 12.9 5.6 12.9 Q4.9 12.9 4.8 12.2" fill="none" stroke="#1c1c1c" stroke-width="1.6" stroke-linecap="round"/><path d="M6.4 7.3H10.2" stroke="#1c1c1c" stroke-width="1.3"/></g></svg>
<div class="fn" style="left:44px;top:15px;">sub_1400013F0</div>
<svg style="left:22px;top:28px" width="16" height="14" viewBox="0 0 16 14"><rect x="0" y="0" width="15.8" height="14" fill="#7a7a7a"/><rect x="1" y="2.6" width="13.8" height="11.4" fill="#f0f0f0"/><rect x="0.6" y="0" width="14.6" height="2.1" fill="#0dd3ff"/><rect x="0.6" y="2.1" width="14.6" height="0.6" fill="#2a9fbf"/><g transform="translate(0,-0.2)"><path d="M10.7 4.9 Q10.5 3.9 9.5 4 Q8.5 4.2 8.2 5.8 L6.9 11.5 Q6.6 12.9 5.6 12.9 Q4.9 12.9 4.8 12.2" fill="none" stroke="#1c1c1c" stroke-width="1.6" stroke-linecap="round"/><path d="M6.4 7.3H10.2" stroke="#1c1c1c" stroke-width="1.3"/></g></svg>
<div class="fn" style="left:44px;top:29px;">sub_140001410</div>
<svg style="left:22px;top:42px" width="16" height="14" viewBox="0 0 16 14"><rect x="0" y="0" width="15.8" height="14" fill="#7a7a7a"/><rect x="1" y="2.6" width="13.8" height="11.4" fill="#f0f0f0"/><rect x="0.6" y="0" width="14.6" height="2.1" fill="#0dd3ff"/><rect x="0.6" y="2.1" width="14.6" height="0.6" fill="#2a9fbf"/><g transform="translate(0,-0.2)"><path d="M10.7 4.9 Q10.5 3.9 9.5 4 Q8.5 4.2 8.2 5.8 L6.9 11.5 Q6.6 12.9 5.6 12.9 Q4.9 12.9 4.8 12.2" fill="none" stroke="#1c1c1c" stroke-width="1.6" stroke-linecap="round"/><path d="M6.4 7.3H10.2" stroke="#1c1c1c" stroke-width="1.3"/></g></svg>
<div class="fn" style="left:44px;top:43px;">sub_140001520</div>
<svg style="left:22px;top:56px" width="16" height="14" viewBox="0 0 16 14"><rect x="0" y="0" width="15.8" height="14" fill="#7a7a7a"/><rect x="1" y="2.6" width="13.8" height="11.4" fill="#f0f0f0"/><rect x="0.6" y="0" width="14.6" height="2.1" fill="#0dd3ff"/><rect x="0.6" y="2.1" width="14.6" height="0.6" fill="#2a9fbf"/><g transform="translate(0,-0.2)"><path d="M10.7 4.9 Q10.5 3.9 9.5 4 Q8.5 4.2 8.2 5.8 L6.9 11.5 Q6.6 12.9 5.6 12.9 Q4.9 12.9 4.8 12.2" fill="none" stroke="#1c1c1c" stroke-width="1.6" stroke-linecap="round"/><path d="M6.4 7.3H10.2" stroke="#1c1c1c" stroke-width="1.3"/></g></svg>
<div class="fn" style="left:44px;top:57px;">sub_140001560</div>
<svg style="left:22px;top:70px" width="16" height="14" viewBox="0 0 16 14"><rect x="0" y="0" width="15.8" height="14" fill="#7a7a7a"/><rect x="1" y="2.6" width="13.8" height="11.4" fill="#f0f0f0"/><rect x="0.6" y="0" width="14.6" height="2.1" fill="#0dd3ff"/><rect x="0.6" y="2.1" width="14.6" height="0.6" fill="#2a9fbf"/><g transform="translate(0,-0.2)"><path d="M10.7 4.9 Q10.5 3.9 9.5 4 Q8.5 4.2 8.2 5.8 L6.9 11.5 Q6.6 12.9 5.6 12.9 Q4.9 12.9 4.8 12.2" fill="none" stroke="#1c1c1c" stroke-width="1.6" stroke-linecap="round"/><path d="M6.4 7.3H10.2" stroke="#1c1c1c" stroke-width="1.3"/></g></svg>
<div class="fn" style="left:44px;top:71px;">sub_1400015C0</div>
<div style="left:19px;top:84px;width:302px;height:14px;background:#d9d9d9"></div>
<svg style="left:22px;top:84px" width="16" height="14" viewBox="0 0 16 14"><rect x="0" y="0" width="15.8" height="14" fill="#5c87b0"/><rect x="1" y="2.6" width="13.8" height="11.4" fill="#a9d1f5"/><rect x="0.6" y="0" width="14.6" height="2.1" fill="#0dd3ff"/><rect x="0.6" y="2.1" width="14.6" height="0.6" fill="#2a9fbf"/><g transform="translate(0,-0.2)"><path d="M10.7 4.9 Q10.5 3.9 9.5 4 Q8.5 4.2 8.2 5.8 L6.9 11.5 Q6.6 12.9 5.6 12.9 Q4.9 12.9 4.8 12.2" fill="none" stroke="#1c1c1c" stroke-width="1.6" stroke-linecap="round"/><path d="M6.4 7.3H10.2" stroke="#1c1c1c" stroke-width="1.3"/></g></svg>
<div class="fn" style="left:44px;top:85px;">sub_140001660</div>
<svg style="left:22px;top:98px" width="16" height="14" viewBox="0 0 16 14"><rect x="0" y="0" width="15.8" height="14" fill="#7a7a7a"/><rect x="1" y="2.6" width="13.8" height="11.4" fill="#f0f0f0"/><rect x="0.6" y="0" width="14.6" height="2.1" fill="#0dd3ff"/><rect x="0.6" y="2.1" width="14.6" height="0.6" fill="#2a9fbf"/><g transform="translate(0,-0.2)"><path d="M10.7 4.9 Q10.5 3.9 9.5 4 Q8.5 4.2 8.2 5.8 L6.9 11.5 Q6.6 12.9 5.6 12.9 Q4.9 12.9 4.8 12.2" fill="none" stroke="#1c1c1c" stroke-width="1.6" stroke-linecap="round"/><path d="M6.4 7.3H10.2" stroke="#1c1c1c" stroke-width="1.3"/></g></svg>
<div class="fn" style="left:44px;top:99px;">sub_1400016C0</div>
<svg style="left:22px;top:112px" width="16" height="14" viewBox="0 0 16 14"><rect x="0" y="0" width="15.8" height="14" fill="#7a7a7a"/><rect x="1" y="2.6" width="13.8" height="11.4" fill="#f0f0f0"/><rect x="0.6" y="0" width="14.6" height="2.1" fill="#0dd3ff"/><rect x="0.6" y="2.1" width="14.6" height="0.6" fill="#2a9fbf"/><g transform="translate(0,-0.2)"><path d="M10.7 4.9 Q10.5 3.9 9.5 4 Q8.5 4.2 8.2 5.8 L6.9 11.5 Q6.6 12.9 5.6 12.9 Q4.9 12.9 4.8 12.2" fill="none" stroke="#1c1c1c" stroke-width="1.6" stroke-linecap="round"/><path d="M6.4 7.3H10.2" stroke="#1c1c1c" stroke-width="1.3"/></g></svg>
<div class="fn" style="left:44px;top:113px;">sub_1400016F0</div>
<svg style="left:22px;top:126px" width="16" height="14" viewBox="0 0 16 14"><rect x="0" y="0" width="15.8" height="14" fill="#7a7a7a"/><rect x="1" y="2.6" width="13.8" height="11.4" fill="#f0f0f0"/><rect x="0.6" y="0" width="14.6" height="2.1" fill="#0dd3ff"/><rect x="0.6" y="2.1" width="14.6" height="0.6" fill="#2a9fbf"/><g transform="translate(0,-0.2)"><path d="M10.7 4.9 Q10.5 3.9 9.5 4 Q8.5 4.2 8.2 5.8 L6.9 11.5 Q6.6 12.9 5.6 12.9 Q4.9 12.9 4.8 12.2" fill="none" stroke="#1c1c1c" stroke-width="1.6" stroke-linecap="round"/><path d="M6.4 7.3H10.2" stroke="#1c1c1c" stroke-width="1.3"/></g></svg>
<div class="fn" style="left:44px;top:127px;">sub_140001990</div>
<svg style="left:22px;top:140px" width="16" height="14" viewBox="0 0 16 14"><rect x="0" y="0" width="15.8" height="14" fill="#7a7a7a"/><rect x="1" y="2.6" width="13.8" height="11.4" fill="#f0f0f0"/><rect x="0.6" y="0" width="14.6" height="2.1" fill="#0dd3ff"/><rect x="0.6" y="2.1" width="14.6" height="0.6" fill="#2a9fbf"/><g transform="translate(0,-0.2)"><path d="M10.7 4.9 Q10.5 3.9 9.5 4 Q8.5 4.2 8.2 5.8 L6.9 11.5 Q6.6 12.9 5.6 12.9 Q4.9 12.9 4.8 12.2" fill="none" stroke="#1c1c1c" stroke-width="1.6" stroke-linecap="round"/><path d="M6.4 7.3H10.2" stroke="#1c1c1c" stroke-width="1.3"/></g></svg>
<div class="fn" style="left:44px;top:141px;">sub_140001A00</div>
<svg style="left:22px;top:154px" width="16" height="14" viewBox="0 0 16 14"><rect x="0" y="0" width="15.8" height="14" fill="#7a7a7a"/><rect x="1" y="2.6" width="13.8" height="11.4" fill="#f0f0f0"/><rect x="0.6" y="0" width="14.6" height="2.1" fill="#0dd3ff"/><rect x="0.6" y="2.1" width="14.6" height="0.6" fill="#2a9fbf"/><g transform="translate(0,-0.2)"><path d="M10.7 4.9 Q10.5 3.9 9.5 4 Q8.5 4.2 8.2 5.8 L6.9 11.5 Q6.6 12.9 5.6 12.9 Q4.9 12.9 4.8 12.2" fill="none" stroke="#1c1c1c" stroke-width="1.6" stroke-linecap="round"/><path d="M6.4 7.3H10.2" stroke="#1c1c1c" stroke-width="1.3"/></g></svg>
<div class="fn" style="left:44px;top:155px;">sub_140001A60</div>
<svg style="left:22px;top:168px" width="16" height="14" viewBox="0 0 16 14"><rect x="0" y="0" width="15.8" height="14" fill="#7a7a7a"/><rect x="1" y="2.6" width="13.8" height="11.4" fill="#f0f0f0"/><rect x="0.6" y="0" width="14.6" height="2.1" fill="#0dd3ff"/><rect x="0.6" y="2.1" width="14.6" height="0.6" fill="#2a9fbf"/><g transform="translate(0,-0.2)"><path d="M10.7 4.9 Q10.5 3.9 9.5 4 Q8.5 4.2 8.2 5.8 L6.9 11.5 Q6.6 12.9 5.6 12.9 Q4.9 12.9 4.8 12.2" fill="none" stroke="#1c1c1c" stroke-width="1.6" stroke-linecap="round"/><path d="M6.4 7.3H10.2" stroke="#1c1c1c" stroke-width="1.3"/></g></svg>
<div class="fn" style="left:44px;top:169px;">sub_140001B50</div>
<svg style="left:22px;top:182px" width="16" height="14" viewBox="0 0 16 14"><rect x="0" y="0" width="15.8" height="14" fill="#7a7a7a"/><rect x="1" y="2.6" width="13.8" height="11.4" fill="#f0f0f0"/><rect x="0.6" y="0" width="14.6" height="2.1" fill="#0dd3ff"/><rect x="0.6" y="2.1" width="14.6" height="0.6" fill="#2a9fbf"/><g transform="translate(0,-0.2)"><path d="M10.7 4.9 Q10.5 3.9 9.5 4 Q8.5 4.2 8.2 5.8 L6.9 11.5 Q6.6 12.9 5.6 12.9 Q4.9 12.9 4.8 12.2" fill="none" stroke="#1c1c1c" stroke-width="1.6" stroke-linecap="round"/><path d="M6.4 7.3H10.2" stroke="#1c1c1c" stroke-width="1.3"/></g></svg>
<div class="fn" style="left:44px;top:183px;">sub_140002170</div>
<svg style="left:22px;top:196px" width="16" height="14" viewBox="0 0 16 14"><rect x="0" y="0" width="15.8" height="14" fill="#7a7a7a"/><rect x="1" y="2.6" width="13.8" height="11.4" fill="#f0f0f0"/><rect x="0.6" y="0" width="14.6" height="2.1" fill="#0dd3ff"/><rect x="0.6" y="2.1" width="14.6" height="0.6" fill="#2a9fbf"/><g transform="translate(0,-0.2)"><path d="M10.7 4.9 Q10.5 3.9 9.5 4 Q8.5 4.2 8.2 5.8 L6.9 11.5 Q6.6 12.9 5.6 12.9 Q4.9 12.9 4.8 12.2" fill="none" stroke="#1c1c1c" stroke-width="1.6" stroke-linecap="round"/><path d="M6.4 7.3H10.2" stroke="#1c1c1c" stroke-width="1.3"/></g></svg>
<div class="fn" style="left:44px;top:197px;">sub_1400021C0</div>
<svg style="left:22px;top:210px" width="16" height="14" viewBox="0 0 16 14"><rect x="0" y="0" width="15.8" height="14" fill="#7a7a7a"/><rect x="1" y="2.6" width="13.8" height="11.4" fill="#f0f0f0"/><rect x="0.6" y="0" width="14.6" height="2.1" fill="#0dd3ff"/><rect x="0.6" y="2.1" width="14.6" height="0.6" fill="#2a9fbf"/><g transform="translate(0,-0.2)"><path d="M10.7 4.9 Q10.5 3.9 9.5 4 Q8.5 4.2 8.2 5.8 L6.9 11.5 Q6.6 12.9 5.6 12.9 Q4.9 12.9 4.8 12.2" fill="none" stroke="#1c1c1c" stroke-width="1.6" stroke-linecap="round"/><path d="M6.4 7.3H10.2" stroke="#1c1c1c" stroke-width="1.3"/></g></svg>
<div class="fn" style="left:44px;top:211px;">sub_140002530</div>
<svg style="left:22px;top:224px" width="16" height="14" viewBox="0 0 16 14"><rect x="0" y="0" width="15.8" height="14" fill="#7a7a7a"/><rect x="1" y="2.6" width="13.8" height="11.4" fill="#f0f0f0"/><rect x="0.6" y="0" width="14.6" height="2.1" fill="#0dd3ff"/><rect x="0.6" y="2.1" width="14.6" height="0.6" fill="#2a9fbf"/><g transform="translate(0,-0.2)"><path d="M10.7 4.9 Q10.5 3.9 9.5 4 Q8.5 4.2 8.2 5.8 L6.9 11.5 Q6.6 12.9 5.6 12.9 Q4.9 12.9 4.8 12.2" fill="none" stroke="#1c1c1c" stroke-width="1.6" stroke-linecap="round"/><path d="M6.4 7.3H10.2" stroke="#1c1c1c" stroke-width="1.3"/></g></svg>
<div class="fn" style="left:44px;top:225px;">sub_140002580</div>
<svg style="left:22px;top:238px" width="16" height="14" viewBox="0 0 16 14"><rect x="0" y="0" width="15.8" height="14" fill="#7a7a7a"/><rect x="1" y="2.6" width="13.8" height="11.4" fill="#f0f0f0"/><rect x="0.6" y="0" width="14.6" height="2.1" fill="#0dd3ff"/><rect x="0.6" y="2.1" width="14.6" height="0.6" fill="#2a9fbf"/><g transform="translate(0,-0.2)"><path d="M10.7 4.9 Q10.5 3.9 9.5 4 Q8.5 4.2 8.2 5.8 L6.9 11.5 Q6.6 12.9 5.6 12.9 Q4.9 12.9 4.8 12.2" fill="none" stroke="#1c1c1c" stroke-width="1.6" stroke-linecap="round"/><path d="M6.4 7.3H10.2" stroke="#1c1c1c" stroke-width="1.3"/></g></svg>
<div class="fn" style="left:44px;top:239px;">sub_140002650</div>
<svg style="left:22px;top:252px" width="16" height="14" viewBox="0 0 16 14"><rect x="0" y="0" width="15.8" height="14" fill="#7a7a7a"/><rect x="1" y="2.6" width="13.8" height="11.4" fill="#f0f0f0"/><rect x="0.6" y="0" width="14.6" height="2.1" fill="#0dd3ff"/><rect x="0.6" y="2.1" width="14.6" height="0.6" fill="#2a9fbf"/><g transform="translate(0,-0.2)"><path d="M10.7 4.9 Q10.5 3.9 9.5 4 Q8.5 4.2 8.2 5.8 L6.9 11.5 Q6.6 12.9 5.6 12.9 Q4.9 12.9 4.8 12.2" fill="none" stroke="#1c1c1c" stroke-width="1.6" stroke-linecap="round"/><path d="M6.4 7.3H10.2" stroke="#1c1c1c" stroke-width="1.3"/></g></svg>
<div class="fn" style="left:44px;top:253px;">sub_1400026C0</div>
<svg style="left:22px;top:266px" width="16" height="14" viewBox="0 0 16 14"><rect x="0" y="0" width="15.8" height="14" fill="#7a7a7a"/><rect x="1" y="2.6" width="13.8" height="11.4" fill="#f0f0f0"/><rect x="0.6" y="0" width="14.6" height="2.1" fill="#0dd3ff"/><rect x="0.6" y="2.1" width="14.6" height="0.6" fill="#2a9fbf"/><g transform="translate(0,-0.2)"><path d="M10.7 4.9 Q10.5 3.9 9.5 4 Q8.5 4.2 8.2 5.8 L6.9 11.5 Q6.6 12.9 5.6 12.9 Q4.9 12.9 4.8 12.2" fill="none" stroke="#1c1c1c" stroke-width="1.6" stroke-linecap="round"/><path d="M6.4 7.3H10.2" stroke="#1c1c1c" stroke-width="1.3"/></g></svg>
<div class="fn" style="left:44px;top:267px;">sub_1400034B0</div>
<svg style="left:22px;top:280px" width="16" height="14" viewBox="0 0 16 14"><rect x="0" y="0" width="15.8" height="14" fill="#7a7a7a"/><rect x="1" y="2.6" width="13.8" height="11.4" fill="#f0f0f0"/><rect x="0.6" y="0" width="14.6" height="2.1" fill="#0dd3ff"/><rect x="0.6" y="2.1" width="14.6" height="0.6" fill="#2a9fbf"/><g transform="translate(0,-0.2)"><path d="M10.7 4.9 Q10.5 3.9 9.5 4 Q8.5 4.2 8.2 5.8 L6.9 11.5 Q6.6 12.9 5.6 12.9 Q4.9 12.9 4.8 12.2" fill="none" stroke="#1c1c1c" stroke-width="1.6" stroke-linecap="round"/><path d="M6.4 7.3H10.2" stroke="#1c1c1c" stroke-width="1.3"/></g></svg>
<div class="fn" style="left:44px;top:281px;">sub_1400035E0</div>
<svg style="left:22px;top:294px" width="16" height="14" viewBox="0 0 16 14"><rect x="0" y="0" width="15.8" height="14" fill="#7a7a7a"/><rect x="1" y="2.6" width="13.8" height="11.4" fill="#f0f0f0"/><rect x="0.6" y="0" width="14.6" height="2.1" fill="#0dd3ff"/><rect x="0.6" y="2.1" width="14.6" height="0.6" fill="#2a9fbf"/><g transform="translate(0,-0.2)"><path d="M10.7 4.9 Q10.5 3.9 9.5 4 Q8.5 4.2 8.2 5.8 L6.9 11.5 Q6.6 12.9 5.6 12.9 Q4.9 12.9 4.8 12.2" fill="none" stroke="#1c1c1c" stroke-width="1.6" stroke-linecap="round"/><path d="M6.4 7.3H10.2" stroke="#1c1c1c" stroke-width="1.3"/></g></svg>
<div class="fn" style="left:44px;top:295px;">sub_140003620</div>
<svg style="left:22px;top:308px" width="16" height="14" viewBox="0 0 16 14"><rect x="0" y="0" width="15.8" height="14" fill="#7a7a7a"/><rect x="1" y="2.6" width="13.8" height="11.4" fill="#f0f0f0"/><rect x="0.6" y="0" width="14.6" height="2.1" fill="#0dd3ff"/><rect x="0.6" y="2.1" width="14.6" height="0.6" fill="#2a9fbf"/><g transform="translate(0,-0.2)"><path d="M10.7 4.9 Q10.5 3.9 9.5 4 Q8.5 4.2 8.2 5.8 L6.9 11.5 Q6.6 12.9 5.6 12.9 Q4.9 12.9 4.8 12.2" fill="none" stroke="#1c1c1c" stroke-width="1.6" stroke-linecap="round"/><path d="M6.4 7.3H10.2" stroke="#1c1c1c" stroke-width="1.3"/></g></svg>
<div class="fn" style="left:44px;top:309px;">sub_140003AF0</div>
<svg style="left:22px;top:322px" width="16" height="14" viewBox="0 0 16 14"><rect x="0" y="0" width="15.8" height="14" fill="#7a7a7a"/><rect x="1" y="2.6" width="13.8" height="11.4" fill="#f0f0f0"/><rect x="0.6" y="0" width="14.6" height="2.1" fill="#0dd3ff"/><rect x="0.6" y="2.1" width="14.6" height="0.6" fill="#2a9fbf"/><g transform="translate(0,-0.2)"><path d="M10.7 4.9 Q10.5 3.9 9.5 4 Q8.5 4.2 8.2 5.8 L6.9 11.5 Q6.6 12.9 5.6 12.9 Q4.9 12.9 4.8 12.2" fill="none" stroke="#1c1c1c" stroke-width="1.6" stroke-linecap="round"/><path d="M6.4 7.3H10.2" stroke="#1c1c1c" stroke-width="1.3"/></g></svg>
<div class="fn" style="left:44px;top:323px;">sub_1400042E0</div>
<svg style="left:22px;top:336px" width="16" height="14" viewBox="0 0 16 14"><rect x="0" y="0" width="15.8" height="14" fill="#7a7a7a"/><rect x="1" y="2.6" width="13.8" height="11.4" fill="#f0f0f0"/><rect x="0.6" y="0" width="14.6" height="2.1" fill="#0dd3ff"/><rect x="0.6" y="2.1" width="14.6" height="0.6" fill="#2a9fbf"/><g transform="translate(0,-0.2)"><path d="M10.7 4.9 Q10.5 3.9 9.5 4 Q8.5 4.2 8.2 5.8 L6.9 11.5 Q6.6 12.9 5.6 12.9 Q4.9 12.9 4.8 12.2" fill="none" stroke="#1c1c1c" stroke-width="1.6" stroke-linecap="round"/><path d="M6.4 7.3H10.2" stroke="#1c1c1c" stroke-width="1.3"/></g></svg>
<div class="fn" style="left:44px;top:337px;">sub_1400045C0</div>
<svg style="left:22px;top:350px" width="16" height="14" viewBox="0 0 16 14"><rect x="0" y="0" width="15.8" height="14" fill="#7a7a7a"/><rect x="1" y="2.6" width="13.8" height="11.4" fill="#f0f0f0"/><rect x="0.6" y="0" width="14.6" height="2.1" fill="#0dd3ff"/><rect x="0.6" y="2.1" width="14.6" height="0.6" fill="#2a9fbf"/><g transform="translate(0,-0.2)"><path d="M10.7 4.9 Q10.5 3.9 9.5 4 Q8.5 4.2 8.2 5.8 L6.9 11.5 Q6.6 12.9 5.6 12.9 Q4.9 12.9 4.8 12.2" fill="none" stroke="#1c1c1c" stroke-width="1.6" stroke-linecap="round"/><path d="M6.4 7.3H10.2" stroke="#1c1c1c" stroke-width="1.3"/></g></svg>
<div class="fn" style="left:44px;top:351px;">sub_140004650</div>
<svg style="left:22px;top:364px" width="16" height="14" viewBox="0 0 16 14"><rect x="0" y="0" width="15.8" height="14" fill="#7a7a7a"/><rect x="1" y="2.6" width="13.8" height="11.4" fill="#f0f0f0"/><rect x="0.6" y="0" width="14.6" height="2.1" fill="#0dd3ff"/><rect x="0.6" y="2.1" width="14.6" height="0.6" fill="#2a9fbf"/><g transform="translate(0,-0.2)"><path d="M10.7 4.9 Q10.5 3.9 9.5 4 Q8.5 4.2 8.2 5.8 L6.9 11.5 Q6.6 12.9 5.6 12.9 Q4.9 12.9 4.8 12.2" fill="none" stroke="#1c1c1c" stroke-width="1.6" stroke-linecap="round"/><path d="M6.4 7.3H10.2" stroke="#1c1c1c" stroke-width="1.3"/></g></svg>
<div class="fn" style="left:44px;top:365px;">sub_1400046E0</div>
<svg style="left:22px;top:378px" width="16" height="14" viewBox="0 0 16 14"><rect x="0" y="0" width="15.8" height="14" fill="#7a7a7a"/><rect x="1" y="2.6" width="13.8" height="11.4" fill="#f0f0f0"/><rect x="0.6" y="0" width="14.6" height="2.1" fill="#0dd3ff"/><rect x="0.6" y="2.1" width="14.6" height="0.6" fill="#2a9fbf"/><g transform="translate(0,-0.2)"><path d="M10.7 4.9 Q10.5 3.9 9.5 4 Q8.5 4.2 8.2 5.8 L6.9 11.5 Q6.6 12.9 5.6 12.9 Q4.9 12.9 4.8 12.2" fill="none" stroke="#1c1c1c" stroke-width="1.6" stroke-linecap="round"/><path d="M6.4 7.3H10.2" stroke="#1c1c1c" stroke-width="1.3"/></g></svg>
<div class="fn" style="left:44px;top:379px;">sub_140004790</div>
<svg style="left:22px;top:392px" width="16" height="14" viewBox="0 0 16 14"><rect x="0" y="0" width="15.8" height="14" fill="#7a7a7a"/><rect x="1" y="2.6" width="13.8" height="11.4" fill="#f0f0f0"/><rect x="0.6" y="0" width="14.6" height="2.1" fill="#0dd3ff"/><rect x="0.6" y="2.1" width="14.6" height="0.6" fill="#2a9fbf"/><g transform="translate(0,-0.2)"><path d="M10.7 4.9 Q10.5 3.9 9.5 4 Q8.5 4.2 8.2 5.8 L6.9 11.5 Q6.6 12.9 5.6 12.9 Q4.9 12.9 4.8 12.2" fill="none" stroke="#1c1c1c" stroke-width="1.6" stroke-linecap="round"/><path d="M6.4 7.3H10.2" stroke="#1c1c1c" stroke-width="1.3"/></g></svg>
<div class="fn" style="left:44px;top:393px;">sub_140004AB0</div>
<svg style="left:22px;top:406px" width="16" height="14" viewBox="0 0 16 14"><rect x="0" y="0" width="15.8" height="14" fill="#7a7a7a"/><rect x="1" y="2.6" width="13.8" height="11.4" fill="#f0f0f0"/><rect x="0.6" y="0" width="14.6" height="2.1" fill="#0dd3ff"/><rect x="0.6" y="2.1" width="14.6" height="0.6" fill="#2a9fbf"/><g transform="translate(0,-0.2)"><path d="M10.7 4.9 Q10.5 3.9 9.5 4 Q8.5 4.2 8.2 5.8 L6.9 11.5 Q6.6 12.9 5.6 12.9 Q4.9 12.9 4.8 12.2" fill="none" stroke="#1c1c1c" stroke-width="1.6" stroke-linecap="round"/><path d="M6.4 7.3H10.2" stroke="#1c1c1c" stroke-width="1.3"/></g></svg>
<div class="fn" style="left:44px;top:407px;">sub_1400051A0</div>
<svg style="left:22px;top:420px" width="16" height="14" viewBox="0 0 16 14"><rect x="0" y="0" width="15.8" height="14" fill="#7a7a7a"/><rect x="1" y="2.6" width="13.8" height="11.4" fill="#f0f0f0"/><rect x="0.6" y="0" width="14.6" height="2.1" fill="#0dd3ff"/><rect x="0.6" y="2.1" width="14.6" height="0.6" fill="#2a9fbf"/><g transform="translate(0,-0.2)"><path d="M10.7 4.9 Q10.5 3.9 9.5 4 Q8.5 4.2 8.2 5.8 L6.9 11.5 Q6.6 12.9 5.6 12.9 Q4.9 12.9 4.8 12.2" fill="none" stroke="#1c1c1c" stroke-width="1.6" stroke-linecap="round"/><path d="M6.4 7.3H10.2" stroke="#1c1c1c" stroke-width="1.3"/></g></svg>
<div class="fn" style="left:44px;top:421px;">sub_1400051E0</div>
<svg style="left:22px;top:434px" width="16" height="14" viewBox="0 0 16 14"><rect x="0" y="0" width="15.8" height="14" fill="#7a7a7a"/><rect x="1" y="2.6" width="13.8" height="11.4" fill="#f0f0f0"/><rect x="0.6" y="0" width="14.6" height="2.1" fill="#0dd3ff"/><rect x="0.6" y="2.1" width="14.6" height="0.6" fill="#2a9fbf"/><g transform="translate(0,-0.2)"><path d="M10.7 4.9 Q10.5 3.9 9.5 4 Q8.5 4.2 8.2 5.8 L6.9 11.5 Q6.6 12.9 5.6 12.9 Q4.9 12.9 4.8 12.2" fill="none" stroke="#1c1c1c" stroke-width="1.6" stroke-linecap="round"/><path d="M6.4 7.3H10.2" stroke="#1c1c1c" stroke-width="1.3"/></g></svg>
<div class="fn" style="left:44px;top:435px;">sub_140005240</div>
<svg style="left:22px;top:448px" width="16" height="14" viewBox="0 0 16 14"><rect x="0" y="0" width="15.8" height="14" fill="#7a7a7a"/><rect x="1" y="2.6" width="13.8" height="11.4" fill="#f0f0f0"/><rect x="0.6" y="0" width="14.6" height="2.1" fill="#0dd3ff"/><rect x="0.6" y="2.1" width="14.6" height="0.6" fill="#2a9fbf"/><g transform="translate(0,-0.2)"><path d="M10.7 4.9 Q10.5 3.9 9.5 4 Q8.5 4.2 8.2 5.8 L6.9 11.5 Q6.6 12.9 5.6 12.9 Q4.9 12.9 4.8 12.2" fill="none" stroke="#1c1c1c" stroke-width="1.6" stroke-linecap="round"/><path d="M6.4 7.3H10.2" stroke="#1c1c1c" stroke-width="1.3"/></g></svg>
<div class="fn" style="left:44px;top:449px;">sub_1400052A0</div>
<svg style="left:22px;top:462px" width="16" height="14" viewBox="0 0 16 14"><rect x="0" y="0" width="15.8" height="14" fill="#7a7a7a"/><rect x="1" y="2.6" width="13.8" height="11.4" fill="#f0f0f0"/><rect x="0.6" y="0" width="14.6" height="2.1" fill="#0dd3ff"/><rect x="0.6" y="2.1" width="14.6" height="0.6" fill="#2a9fbf"/><g transform="translate(0,-0.2)"><path d="M10.7 4.9 Q10.5 3.9 9.5 4 Q8.5 4.2 8.2 5.8 L6.9 11.5 Q6.6 12.9 5.6 12.9 Q4.9 12.9 4.8 12.2" fill="none" stroke="#1c1c1c" stroke-width="1.6" stroke-linecap="round"/><path d="M6.4 7.3H10.2" stroke="#1c1c1c" stroke-width="1.3"/></g></svg>
<div class="fn" style="left:44px;top:463px;">sub_140005C80</div>
<svg style="left:22px;top:476px" width="16" height="14" viewBox="0 0 16 14"><rect x="0" y="0" width="15.8" height="14" fill="#7a7a7a"/><rect x="1" y="2.6" width="13.8" height="11.4" fill="#f0f0f0"/><rect x="0.6" y="0" width="14.6" height="2.1" fill="#0dd3ff"/><rect x="0.6" y="2.1" width="14.6" height="0.6" fill="#2a9fbf"/><g transform="translate(0,-0.2)"><path d="M10.7 4.9 Q10.5 3.9 9.5 4 Q8.5 4.2 8.2 5.8 L6.9 11.5 Q6.6 12.9 5.6 12.9 Q4.9 12.9 4.8 12.2" fill="none" stroke="#1c1c1c" stroke-width="1.6" stroke-linecap="round"/><path d="M6.4 7.3H10.2" stroke="#1c1c1c" stroke-width="1.3"/></g></svg>
<div class="fn" style="left:44px;top:477px;">sub_1400062A0</div>
<svg style="left:22px;top:490px" width="16" height="14" viewBox="0 0 16 14"><rect x="0" y="0" width="15.8" height="14" fill="#7a7a7a"/><rect x="1" y="2.6" width="13.8" height="11.4" fill="#f0f0f0"/><rect x="0.6" y="0" width="14.6" height="2.1" fill="#0dd3ff"/><rect x="0.6" y="2.1" width="14.6" height="0.6" fill="#2a9fbf"/><g transform="translate(0,-0.2)"><path d="M10.7 4.9 Q10.5 3.9 9.5 4 Q8.5 4.2 8.2 5.8 L6.9 11.5 Q6.6 12.9 5.6 12.9 Q4.9 12.9 4.8 12.2" fill="none" stroke="#1c1c1c" stroke-width="1.6" stroke-linecap="round"/><path d="M6.4 7.3H10.2" stroke="#1c1c1c" stroke-width="1.3"/></g></svg>
<div class="fn" style="left:44px;top:491px;">sub_1400063F0</div>
</div>
<div class="t" style="left:4px;top:690px;letter-spacing:0.000px;">第</div>
<div class="t" style="left:17.5px;top:690px;letter-spacing:0.152px;">10</div>
<div class="t" style="left:31px;top:690px;letter-spacing:0.000px;">行</div>
<div class="t" style="left:43px;top:690px;">，</div>
<div class="t" style="left:53.5px;top:690px;letter-spacing:0.000px;">共</div>
<div class="t" style="left:65.5px;top:690px;letter-spacing:-0.065px;">4205</div>
<div class="t" style="left:92px;top:690px;letter-spacing:0.000px;">行</div>
<div class="t" style="left:104px;top:690px;letter-spacing:0.000px;">,</div>
<div class="t" style="left:112px;top:690px;letter-spacing:0.429px;">/sub_140001660</div>
<div style="left:345px;top:117px;width:1366px;height:22px;background:#f0f0f0;border-top:1px solid #d9d9d9;border-left:1px solid #d9d9d9;border-right:1px solid #d9d9d9"></div>
<div style="left:343px;top:138px;width:1369px;height:1px;background:#b9b9b9"></div>
<div style="left:570px;top:118px;width:1px;height:20px;background:#d9d9d9"></div>
<div style="left:798px;top:118px;width:1px;height:20px;background:#d9d9d9"></div>
<div style="left:1027px;top:118px;width:1px;height:20px;background:#d9d9d9"></div>
<div style="left:1255px;top:118px;width:1px;height:20px;background:#d9d9d9"></div>
<div style="left:1483px;top:118px;width:1px;height:20px;background:#d9d9d9"></div>
<div style="left:569px;top:115px;width:232px;height:24px;background:#fff;border:1px solid #d9d9d9;border-bottom:none"></div>
<svg style="left:355px;top:119px" width="16" height="16" viewBox="0 0 16 16"><rect x="0.5" y="0.5" width="14.8" height="14.8" rx="1.4" fill="#fcfcfc" stroke="#6a6a6a" stroke-width="1"/><rect x="1" y="1.1" width="13.8" height="2.3" fill="#0dd3ff"/><rect x="1" y="3.3" width="13.8" height="0.7" fill="#5a8a98"/><rect x="2.3" y="4" width="11.2" height="10.4" rx="1" fill="#b9b9b9"/><rect x="3.5" y="4.4" width="8.8" height="9" fill="#efefef"/><circle cx="5.1" cy="6.3" r="0.75" fill="#1080c0"/><path d="M6.8 6.3H11" stroke="#222" stroke-width="1"/><circle cx="5.1" cy="8.3" r="0.75" fill="#1080c0"/><path d="M6.8 8.3H11" stroke="#222" stroke-width="1"/><circle cx="5.1" cy="10.3" r="0.75" fill="#1080c0"/><path d="M6.8 10.3H11" stroke="#222" stroke-width="1"/><circle cx="5.1" cy="12.4" r="0.75" fill="#1080c0"/><path d="M6.8 12.4H11" stroke="#222" stroke-width="1"/></svg>
<div class="t" style="left:428.4px;top:122px;letter-spacing:0.798px;">IDA</div>
<div class="t" style="left:449.6px;top:122px;letter-spacing:0.000px;">视图</div>
<div class="t" style="left:474px;top:122px;letter-spacing:-0.200px;">-A</div>
<svg style="left:543px;top:121px" width="14" height="14" viewBox="0 0 14 14"><rect x="0.5" y="0.5" width="13" height="13" rx="1.2" fill="#d2d2d2" stroke="#b2b2b2" stroke-width="1"/><path d="M4 4L10 10M10 4L4 10" stroke="#fff" stroke-width="1.4"/></svg>
<svg style="left:583px;top:118px" width="16" height="16" viewBox="0 0 16 16"><rect x="0.5" y="0.5" width="14.8" height="14.8" rx="1.4" fill="#fcfcfc" stroke="#6a6a6a" stroke-width="1"/><rect x="1" y="1.1" width="13.8" height="2.3" fill="#0dd3ff"/><rect x="1" y="3.3" width="13.8" height="0.7" fill="#5a8a98"/><rect x="2.3" y="4" width="11.2" height="10.4" rx="1" fill="#b9b9b9"/><rect x="3.5" y="4.4" width="8.8" height="9" fill="#efefef"/><circle cx="5.1" cy="6.3" r="0.75" fill="#1080c0"/><path d="M6.8 6.3H11" stroke="#222" stroke-width="1"/><circle cx="5.1" cy="8.3" r="0.75" fill="#1080c0"/><path d="M6.8 8.3H11" stroke="#222" stroke-width="1"/><circle cx="5.1" cy="10.3" r="0.75" fill="#1080c0"/><path d="M6.8 10.3H11" stroke="#222" stroke-width="1"/><circle cx="5.1" cy="12.4" r="0.75" fill="#1080c0"/><path d="M6.8 12.4H11" stroke="#222" stroke-width="1"/></svg>
<div class="t" style="left:660px;top:121px;letter-spacing:0.000px;">伪代码</div>
<div class="t" style="left:696.6px;top:121px;letter-spacing:0.400px;">-A</div>
<svg style="left:771px;top:120px" width="14" height="14" viewBox="0 0 14 14"><rect x="0.6" y="0.6" width="12.8" height="12.8" rx="1.2" fill="#e8936b" stroke="#e04343" stroke-width="1.2"/><path d="M4 4L10 10M10 4L4 10" stroke="#fff" stroke-width="1.5"/></svg>
<svg style="left:811px;top:119px" width="16" height="16" viewBox="0 0 16 16"><rect x="0.5" y="0.5" width="14.8" height="14.8" rx="1.4" fill="#fcfcfc" stroke="#6a6a6a" stroke-width="1"/><rect x="1" y="1.1" width="13.8" height="2.3" fill="#0dd3ff"/><rect x="1" y="3.3" width="13.8" height="0.7" fill="#5a8a98"/><circle cx="7.9" cy="9" r="4.6" fill="#fff" stroke="#111" stroke-width="1"/><path d="M4 11 Q7.9 6.5 11.8 11 Q10 14.2 7.9 14.2 Q5.8 14.2 4 11Z" fill="#111"/><ellipse cx="7.9" cy="11.2" rx="1.5" ry="2" fill="#44ee88"/></svg>
<div class="t" style="left:871.2px;top:122px;letter-spacing:0.000px;">十六进制视图</div>
<div class="t" style="left:943.6px;top:122px;letter-spacing:-0.270px;">-1</div>
<svg style="left:999px;top:121px" width="14" height="14" viewBox="0 0 14 14"><rect x="0.5" y="0.5" width="13" height="13" rx="1.2" fill="#d2d2d2" stroke="#b2b2b2" stroke-width="1"/><path d="M4 4L10 10M10 4L4 10" stroke="#fff" stroke-width="1.4"/></svg>
<svg style="left:1039px;top:119px" width="16" height="16" viewBox="0 0 16 16"><rect x="0.5" y="0.5" width="14.8" height="14.8" rx="1.4" fill="#fcfcfc" stroke="#6a6a6a" stroke-width="1"/><rect x="1" y="1.1" width="13.8" height="2.3" fill="#0dd3ff"/><rect x="1" y="3.3" width="13.8" height="0.7" fill="#5a8a98"/><circle cx="7.9" cy="9.2" r="4.9" fill="#111"/><path d="M7.2 6V11.4Q7.2 12.6 8.6 12.4M6 7.6H9.4" stroke="#fff" stroke-width="1.3" fill="none"/></svg>
<div class="t" style="left:1116px;top:122px;">局部类型</div>
<svg style="left:1228px;top:121px" width="14" height="14" viewBox="0 0 14 14"><rect x="0.5" y="0.5" width="13" height="13" rx="1.2" fill="#d2d2d2" stroke="#b2b2b2" stroke-width="1"/><path d="M4 4L10 10M10 4L4 10" stroke="#fff" stroke-width="1.4"/></svg>
<svg style="left:1268px;top:119px" width="16" height="16" viewBox="0 0 16 16"><rect x="0.5" y="0.5" width="14.8" height="14.8" rx="1.4" fill="#fcfcfc" stroke="#6a6a6a" stroke-width="1"/><rect x="1" y="1.1" width="13.8" height="2.3" fill="#0dd3ff"/><rect x="1" y="3.3" width="13.8" height="0.7" fill="#5a8a98"/><path d="M6.4 3.6V15" stroke="#666" stroke-width="1"/><path d="M1.6 4.6 L7 7.6 L1.6 10.6Z" fill="#55e599"/><path d="M8 7.4H13.6M8.4 9.4H13.6M8.4 11.4H13.6M8.4 13.4H13.6" stroke="#888" stroke-width=".8"/></svg>
<div class="t" style="left:1357px;top:122px;">导入</div>
<svg style="left:1456px;top:121px" width="14" height="14" viewBox="0 0 14 14"><rect x="0.5" y="0.5" width="13" height="13" rx="1.2" fill="#d2d2d2" stroke="#b2b2b2" stroke-width="1"/><path d="M4 4L10 10M10 4L4 10" stroke="#fff" stroke-width="1.4"/></svg>
<svg style="left:1496px;top:119px" width="16" height="16" viewBox="0 0 16 16"><rect x="0.5" y="0.5" width="14.8" height="14.8" rx="1.4" fill="#fcfcfc" stroke="#6a6a6a" stroke-width="1"/><rect x="1" y="1.1" width="13.8" height="2.3" fill="#0dd3ff"/><rect x="1" y="3.3" width="13.8" height="0.7" fill="#5a8a98"/><path d="M9.4 3.6V15" stroke="#666" stroke-width="1"/><path d="M8.8 4.6 L14.4 7.6 L8.8 10.6Z" fill="#55e599"/><path d="M2 7.4H7.8M2 9.4H7.8M2 11.4H7.8M2 13.4H7.8" stroke="#888" stroke-width=".8"/></svg>
<div class="t" style="left:1586px;top:122px;">导出</div>
<svg style="left:1684px;top:121px" width="14" height="14" viewBox="0 0 14 14"><rect x="0.5" y="0.5" width="13" height="13" rx="1.2" fill="#d2d2d2" stroke="#b2b2b2" stroke-width="1"/><path d="M4 4L10 10M10 4L4 10" stroke="#fff" stroke-width="1.4"/></svg>
<div style="left:343px;top:139px;width:37px;height:567px;background:#fff"></div>
<div style="left:380px;top:139px;width:4px;height:567px;background:#f0f0f0"></div>
<div style="left:384px;top:139px;width:1328px;height:567px;background:#fff;border:1px solid #0078d7"></div>
<div style="left:385px;top:140px;width:1326px;height:15px;background:#e4e4e4"></div>
<div style="left:385px;top:686px;width:1326px;height:19px;background:#f0f0f0"></div>
<div style="left:387.0px;top:140px;width:47.5px;height:15px;background:#e6e634"></div>
<div style="left:399.5px;top:185px;width:49px;height:15px;background:#ffff33"></div>
<div style="left:399.5px;top:200px;width:49px;height:15px;background:#ffff33"></div>
<div style="left:714.5px;top:335px;width:49px;height:15px;background:#ffff33"></div>
<div style="left:518.5px;top:395px;width:49px;height:15px;background:#ffff33"></div>
<div style="left:679.5px;top:395px;width:49px;height:15px;background:#ffff33"></div>
<div class="ln" style="left:341.5px;top:141px">1</div>
<div class="m" style="left:385.2px;top:142px"><span class="y"><span class="k">__int64</span></span><span class="k"> sub_140001660</span><span class="n">()</span></div>
<div class="ln" style="left:341.5px;top:156px">2</div>
<div class="m" style="left:385.2px;top:157px"><span class="n">{</span></div>
<div class="ln" style="left:341.5px;top:171px">3</div>
<div class="m" style="left:385.2px;top:172px">  <span class="k">char *v0</span><span class="n">;</span><span class="c"> // rbx</span></div>
<div class="ln" style="left:341.5px;top:186px">4</div>
<div class="m" style="left:385.2px;top:187px">  <span class="y"><span class="d">__int64</span></span><span class="d"> result;</span><span class="c"> // rax</span></div>
<div class="ln" style="left:341.5px;top:201px">5</div>
<div class="m" style="left:385.2px;top:202px">  <span class="y"><span class="k">__int64</span></span><span class="k"> v2</span><span class="n">;</span><span class="c"> // rcx</span></div>
<div class="ln" style="left:341.5px;top:216px">6</div>
<div class="m" style="left:385.2px;top:217px"></div>
<div class="ln" style="left:341.5px;top:231px">7</div>
<div class="m" style="left:385.2px;top:232px">  <span class="v">v0</span><span class="n"> = (</span><span class="k">char *</span><span class="n">)&amp;</span><span class="b">unk_145A380C8</span><span class="n">;</span></div>
<div style="left:350px;top:234px;width:7px;height:7px;background:#22ccff;border-radius:50%"></div>
<div class="ln" style="left:341.5px;top:246px">8</div>
<div class="m" style="left:385.2px;top:247px">  <span class="n">do</span></div>
<div class="ln" style="left:341.5px;top:261px">9</div>
<div class="m" style="left:385.2px;top:262px">  <span class="n">{</span></div>
<div class="ln" style="left:341.5px;top:276px">10</div>
<div class="m" style="left:385.2px;top:277px">    <span class="v">result</span><span class="n"> = *((</span><span class="k">_QWORD *</span><span class="n">)</span><span class="v">v0</span><span class="n"> - 1);</span></div>
<div style="left:350px;top:279px;width:7px;height:7px;background:#22ccff;border-radius:50%"></div>
<div class="ln" style="left:341.5px;top:291px">11</div>
<div class="m" style="left:385.2px;top:292px">    <span class="v">v0</span><span class="n"> -= 8;</span></div>
<div style="left:350px;top:294px;width:7px;height:7px;background:#22ccff;border-radius:50%"></div>
<div class="ln" style="left:341.5px;top:306px">12</div>
<div class="m" style="left:385.2px;top:307px">    <span class="n">if ( </span><span class="v">result</span><span class="n"> )</span></div>
<div style="left:350px;top:309px;width:7px;height:7px;background:#22ccff;border-radius:50%"></div>
<div class="ln" style="left:341.5px;top:321px">13</div>
<div class="m" style="left:385.2px;top:322px">    <span class="n">{</span></div>
<div class="ln" style="left:341.5px;top:336px">14</div>
<div class="m" style="left:385.2px;top:337px">      <span class="n">if ( !</span><span class="b">_InterlockedSub64</span><span class="n">((</span><span class="k">volatile signed </span><span class="y"><span class="k">__int64</span></span><span class="k"> *</span><span class="n">)(</span><span class="v">result</span><span class="n"> - 16), 1u) )</span></div>
<div style="left:350px;top:339px;width:7px;height:7px;background:#22ccff;border-radius:50%"></div>
<div class="ln" style="left:341.5px;top:351px">15</div>
<div class="m" style="left:385.2px;top:352px">      <span class="n">{</span></div>
<div class="ln" style="left:341.5px;top:366px">16</div>
<div class="m" style="left:385.2px;top:367px">        <span class="v">v2</span><span class="n"> = *(</span><span class="k">_QWORD *</span><span class="n">)</span><span class="v">v0</span><span class="n">;</span></div>
<div style="left:350px;top:369px;width:7px;height:7px;background:#22ccff;border-radius:50%"></div>
<div class="ln" style="left:341.5px;top:381px">17</div>
<div class="m" style="left:385.2px;top:382px">        <span class="n">*(</span><span class="k">_QWORD *</span><span class="n">)</span><span class="v">v0</span><span class="n"> = 0;</span></div>
<div style="left:350px;top:384px;width:7px;height:7px;background:#22ccff;border-radius:50%"></div>
<div class="ln" style="left:341.5px;top:396px">18</div>
<div class="m" style="left:385.2px;top:397px">        <span class="v">result</span><span class="n"> = ((</span><span class="y"><span class="k">__int64</span></span><span class="k"> (__fastcall *)(</span><span class="y"><span class="k">__int64</span></span><span class="k">, _QWORD</span><span class="n">))</span><span class="b">unk_142486890</span><span class="n">)(</span><span class="v">v2</span><span class="n"> - 16, 0);</span></div>
<div style="left:350px;top:399px;width:7px;height:7px;background:#22ccff;border-radius:50%"></div>
<div class="ln" style="left:341.5px;top:411px">19</div>
<div class="m" style="left:385.2px;top:412px">      <span class="n">}</span></div>
<div class="ln" style="left:341.5px;top:426px">20</div>
<div class="m" style="left:385.2px;top:427px">    <span class="n">}</span></div>
<div class="ln" style="left:341.5px;top:441px">21</div>
<div class="m" style="left:385.2px;top:442px">  <span class="n">}</span></div>
<div class="ln" style="left:341.5px;top:456px">22</div>
<div class="m" style="left:385.2px;top:457px">  <span class="n">while ( </span><span class="v">v0</span><span class="n"> != (</span><span class="k">char *</span><span class="n">)&amp;</span><span class="b">unk_145A380C8</span><span class="n"> - 40 );</span></div>
<div style="left:350px;top:459px;width:7px;height:7px;background:#22ccff;border-radius:50%"></div>
<div class="ln" style="left:341.5px;top:471px">23</div>
<div class="m" style="left:385.2px;top:472px">  <span class="n">return </span><span class="v">result</span><span class="n">;</span></div>
<div style="left:350px;top:474px;width:7px;height:7px;background:#22ccff;border-radius:50%"></div>
<div class="ln" style="left:341.5px;top:486px">24</div>
<div class="m" style="left:385.2px;top:487px"><span class="n">}</span></div>
<div style="left:350px;top:489px;width:7px;height:7px;background:#22ccff;border-radius:50%"></div>
<div style="left:385px;top:140px;width:2px;height:15px;background:#000"></div>
<div class="st" style="left:387px;top:689px;">00000A60</div>
<div style="left:444px;top:687px;width:1px;height:17px;background:#d0d0d0"></div>
<div class="st" style="left:449px;top:689px;">sub_140001660:1 (140001660)</div>
<div style="left:639px;top:687px;width:1px;height:17px;background:#d0d0d0"></div>
<div style="left:652px;top:687px;width:1px;height:17px;background:#d0d0d0"></div>
<div style="left:-3px;top:710px;width:1715px;height:30px;border:1px solid #828790;background:#f0f0f0;box-shadow:0 0 0 1px #f8f8f8, inset 0 0 0 1px #f8f8f8"></div>
<svg style="left:2px;top:716px" width="16" height="16" viewBox="0 0 16 16"><rect x="0.5" y="0.5" width="14.8" height="14.8" rx="1.4" fill="#fcfcfc" stroke="#6a6a6a" stroke-width="1"/><rect x="1" y="1.1" width="13.8" height="2.3" fill="#0dd3ff"/><rect x="1" y="3.3" width="13.8" height="0.7" fill="#5a8a98"/><rect x="2.3" y="4" width="11.2" height="10.4" rx="1" fill="#b9b9b9"/><rect x="3.5" y="4.4" width="8.8" height="9" fill="#efefef"/><circle cx="5.1" cy="6.3" r="0.75" fill="#1080c0"/><path d="M6.8 6.3H11" stroke="#222" stroke-width="1"/><circle cx="5.1" cy="8.3" r="0.75" fill="#1080c0"/><path d="M6.8 8.3H11" stroke="#222" stroke-width="1"/><circle cx="5.1" cy="10.3" r="0.75" fill="#1080c0"/><path d="M6.8 10.3H11" stroke="#222" stroke-width="1"/><circle cx="5.1" cy="12.4" r="0.75" fill="#1080c0"/><path d="M6.8 12.4H11" stroke="#222" stroke-width="1"/></svg>
<div class="t" style="left:24px;top:718px;">输出</div>
<svg style="left:1641px;top:721px" width="11" height="10" viewBox="0 0 11 10"><rect x="0.6" y="0.6" width="8.7" height="8.8" fill="none" stroke="#2b2b2b" stroke-width="1.2"/><rect x="0.6" y="0.6" width="8.7" height="2.1" fill="#2b2b2b"/></svg>
<svg style="left:1669px;top:721px" width="9" height="10" viewBox="0 0 9 10"><path d="M2.6 3.2V0.8H7.5V5.7H5.8" fill="none" stroke="#2b2b2b" stroke-width="1.2"/><path d="M2 1.2H8.1" stroke="#2b2b2b" stroke-width="1.9"/><rect x="0.6" y="3.5" width="4.8" height="5" fill="none" stroke="#2b2b2b" stroke-width="1.2"/><path d="M0 4H6" stroke="#2b2b2b" stroke-width="1.9"/></svg>
<svg style="left:1694px;top:722px" width="9" height="9" viewBox="0 0 9 9"><path d="M0.9 0.9L7.7 7.7M7.7 0.9L0.9 7.7" stroke="#2b2b2b" stroke-width="2"/></svg>
<div style="left:-1px;top:742px;width:1713px;height:90px;border:1px solid #828790;background:#fff"></div>
<div style="left:1695px;top:743px;width:15px;height:88px;background:#f0f0f0"></div>
<div style="left:1695px;top:796px;width:15px;height:18px;background:#cdcdcd"></div>
<svg style="left:1698.5px;top:749px" width="8" height="6" viewBox="0 0 8 6"><path d="M0.8 4.8 L4 1.6 L7.2 4.8" fill="none" stroke="#404040" stroke-width="1.9"/></svg>
<svg style="left:1698.5px;top:820px" width="8" height="6" viewBox="0 0 8 6"><path d="M0.8 1.2 L4 4.4 L7.2 1.2" fill="none" stroke="#404040" stroke-width="1.9"/></svg>
<div class="m" style="left:5px;top:743px;">[Patching] Loaded v0.2.0 - (c) Markus Gaasedelen - 2024</div>
<div class="m" style="left:5px;top:758px;">-----------------------------------------------------------------------------------------</div>
<div class="m" style="left:5px;top:773px;">Python 3.11.9 (tags/v3.11.9:de54cf5, Apr  2 2024, 10:12:12) [MSC v.1938 64 bit (AMD64)]</div>
<div class="m" style="left:5px;top:788px;">IDAPython 64-bit v9.2.0 (c) The IDAPython Team &lt;idapython@googlegroups.com&gt;</div>
<div class="m" style="left:5px;top:803px;">-----------------------------------------------------------------------------------------</div>
<div class="m" style="left:5px;top:818px;">140001180: using guessed type __int64 sub_140001180(void);</div>
<div style="left:0px;top:834px;width:62px;height:21px;background:#e1e1e1;border:1px solid #adadad"></div>
<div class="t" style="left:20px;top:838px;">IDC</div>
<div style="left:66px;top:834px;width:1645px;height:21px;background:#fff;border:1px solid #7a7a7a"></div>
<div class="st" style="left:0.5px;top:860px;">FL:0000000142DD4E6B</div>
<div style="left:134px;top:857px;width:1px;height:17px;background:#c8c8c8"></div>
<div class="t" style="left:139px;top:860px;">向下</div>
<div style="left:210px;top:857px;width:1px;height:17px;background:#c8c8c8"></div>
<div class="st" style="left:215px;top:860px;">磁盘: 30GB</div>
<div style="left:286px;top:857px;width:1px;height:17px;background:#c8c8c8"></div>
<div style="left:1712px;top:0px;width:1px;height:875px;background:#e6e6e6"></div>
</body></html>
